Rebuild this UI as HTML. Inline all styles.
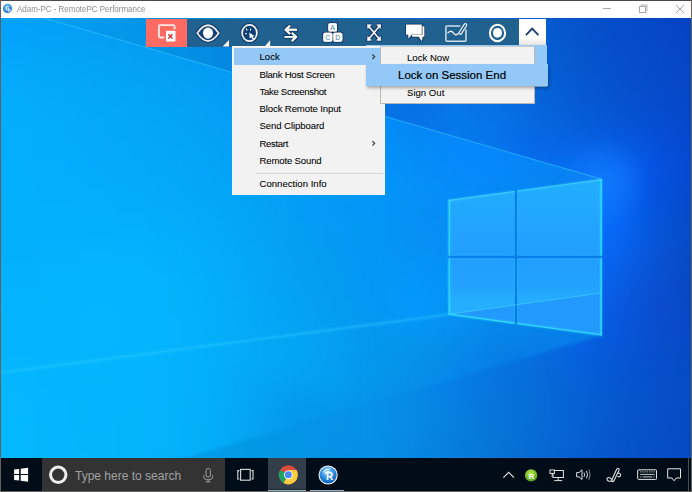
<!DOCTYPE html>
<html><head><meta charset="utf-8">
<style>
*{margin:0;padding:0;box-sizing:border-box}
html,body{width:692px;height:492px;overflow:hidden;background:#6b5d52;font-family:"Liberation Sans",sans-serif}
.abs{position:absolute}
.wpl{position:absolute;left:-24px;top:-8px;width:740px;height:478px}
.wpl i{position:absolute;left:0;width:740px;height:6px;display:block}
.wpclip{position:absolute;left:0;top:0;width:690px;height:440px}
#win{position:absolute;left:0;top:0;width:692px;height:492px;overflow:hidden;background:#fff}
.bd{position:absolute;background:#66605a}
#title{position:absolute;left:1px;top:1px;width:690px;height:17px;background:#fff}
#ttext{position:absolute;left:16px;top:2.3px;font-size:9.6px;color:#8c8c8c;white-space:nowrap;line-height:11px;transform:scaleX(0.83);transform-origin:0 0}
#desk{position:absolute;left:1px;top:18px;width:690px;height:440px;overflow:hidden}
#taskbar{position:absolute;left:1px;top:458px;width:690px;height:33px;background:#000d18}
.tb{position:absolute;top:18px;height:28px;background:#21618f}
.menu{position:absolute;background:#f2f2f2}
.mi{position:absolute;font-size:9.6px;color:#000;white-space:nowrap;line-height:11px;-webkit-text-stroke:0.06px #000}
</style></head><body>
<div id="win">
 <div id="title">
  <svg class="abs" style="left:1.2px;top:1.6px" width="11" height="11" viewBox="0 0 11 11">
   <defs><radialGradient id="rg1" cx="0.45" cy="0.3" r="0.75"><stop offset="0" stop-color="#6cc0ff"/><stop offset="1" stop-color="#0f62c4"/></radialGradient></defs>
   <circle cx="5.5" cy="5.4" r="4.6" fill="url(#rg1)"/>
   <path d="M4.3,3.8 V7.6 M6.3,5 V9 M8,6 V8.6" stroke="#e8f2ff" stroke-width="1.1" fill="none"/>
   <path d="M3.4,4.6 Q5,2.4 7.2,3.6" stroke="#cfe6ff" stroke-width="0.9" fill="none"/>
  </svg>
  <div id="ttext">Adam-PC - RemotePC Performance</div>
  <svg class="abs" style="left:0;top:0" width="690" height="17">
   <line x1="602" y1="7.5" x2="610" y2="7.5" stroke="#aaa" stroke-width="1"/>
   <rect x="638.5" y="5.5" width="6" height="6" fill="none" stroke="#a8a8a8"/>
   <path d="M640 5.5v-1.5h6v6h-1.5" fill="none" stroke="#b4b4b4"/>
   <path d="M675 4l8 8M683 4l-8 8" stroke="#a4a4a4" stroke-width="1"/>
  </svg>
 </div>
 <div id="desk">
<!--WP-->
<div class="wpl" style="filter:blur(3px)">
<i style="top:0px;background:linear-gradient(90deg,#04a4fa 0px,#04a2f8 40px,#049df3 80px,#0498ee 120px,#0494e8 160px,#048fe3 200px,#0588e0 240px,#0581de 280px,#057add 320px,#0574dc 360px,#066fdb 400px,#066bda 440px,#0667d8 480px,#0662d4 520px,#065acf 560px,#0652ca 600px,#064bc7 640px,#0646c6 680px,#0641c3 720px,#0641c3 760px)"></i>
<i style="top:6px;background:linear-gradient(90deg,#04a5fa 0px,#04a2f8 40px,#049df3 80px,#0499ee 120px,#0495e8 160px,#048fe3 200px,#0588e1 240px,#0581df 280px,#057add 320px,#0574dc 360px,#066fdb 400px,#066bda 440px,#0668d9 480px,#0663d5 520px,#065bd0 560px,#0653cb 600px,#064cc8 640px,#0647c6 680px,#0642c3 720px,#0642c3 760px)"></i>
<i style="top:12px;background:linear-gradient(90deg,#04a5fa 0px,#04a3f8 40px,#049ef3 80px,#0499ee 120px,#0495e8 160px,#048fe4 200px,#0588e1 240px,#0581df 280px,#057add 320px,#0574dc 360px,#066fdc 400px,#066cdb 440px,#0669d9 480px,#0664d6 520px,#065cd0 560px,#0653cb 600px,#064cc8 640px,#0647c7 680px,#0642c4 720px,#0642c4 760px)"></i>
<i style="top:18px;background:linear-gradient(90deg,#04a5fa 0px,#04a3f8 40px,#049ef4 80px,#0499ee 120px,#0496e8 160px,#0490e4 200px,#0589e1 240px,#0582df 280px,#057bde 320px,#0574dd 360px,#066fdc 400px,#066cdc 440px,#0669da 480px,#0664d7 520px,#065cd1 560px,#0654cb 600px,#064cc8 640px,#0648c7 680px,#0643c4 720px,#0643c4 760px)"></i>
<i style="top:24px;background:linear-gradient(90deg,#04a6fa 0px,#04a3f8 40px,#049ef4 80px,#049aee 120px,#0496e8 160px,#0490e4 200px,#0589e1 240px,#0582df 280px,#057bde 320px,#0575dd 360px,#0670dd 400px,#066ddc 440px,#066adb 480px,#0665d7 520px,#065dd2 560px,#0654cc 600px,#064dc9 640px,#0648c8 680px,#0643c4 720px,#0643c4 760px)"></i>
<i style="top:30px;background:linear-gradient(90deg,#04a6fa 0px,#04a4f8 40px,#049ff4 80px,#049aee 120px,#0496e8 160px,#0490e4 200px,#0489e1 240px,#0582e0 280px,#057bdf 320px,#0575de 360px,#0670dd 400px,#066ddd 440px,#066bdc 480px,#0666d8 520px,#065ed2 560px,#0655cc 600px,#064dc9 640px,#0649c8 680px,#0643c5 720px,#0643c5 760px)"></i>
<i style="top:36px;background:linear-gradient(90deg,#04a6fa 0px,#04a4f8 40px,#049ff4 80px,#049aee 120px,#0496e8 160px,#0491e4 200px,#048ae2 240px,#0582e0 280px,#057bdf 320px,#0575de 360px,#0670de 400px,#066ede 440px,#066cdd 480px,#0667d9 520px,#065fd3 560px,#0655cd 600px,#064ec9 640px,#0649c8 680px,#0644c5 720px,#0644c5 760px)"></i>
<i style="top:42px;background:linear-gradient(90deg,#04a6fa 0px,#04a4f8 40px,#049ff4 80px,#049bee 120px,#0497e8 160px,#0491e4 200px,#048ae2 240px,#0583e0 280px,#057cdf 320px,#0575df 360px,#0670de 400px,#066ede 440px,#066dde 480px,#0668da 520px,#065fd4 560px,#0656cd 600px,#064eca 640px,#0649c9 680px,#0644c5 720px,#0644c5 760px)"></i>
<i style="top:48px;background:linear-gradient(90deg,#03a7fa 0px,#04a5f8 40px,#04a0f4 80px,#049bee 120px,#0497e9 160px,#0491e5 200px,#048ae2 240px,#0583e1 280px,#057ce0 320px,#0576df 360px,#0671df 400px,#066edf 440px,#066edf 480px,#0669dc 520px,#0660d4 560px,#0656ce 600px,#064fca 640px,#064ac9 680px,#0644c5 720px,#0644c5 760px)"></i>
<i style="top:54px;background:linear-gradient(90deg,#03a7fa 0px,#04a5f8 40px,#04a0f4 80px,#049bee 120px,#0497e9 160px,#0491e5 200px,#048ae3 240px,#0583e1 280px,#057ce0 320px,#0576e0 360px,#0671df 400px,#066fe0 440px,#066fe0 480px,#066add 520px,#0661d5 560px,#0657ce 600px,#064fcb 640px,#064ac9 680px,#0645c6 720px,#0645c6 760px)"></i>
<i style="top:60px;background:linear-gradient(90deg,#03a7fa 0px,#03a5f8 40px,#04a0f4 80px,#049cef 120px,#0497e9 160px,#0492e5 200px,#048be3 240px,#0584e1 280px,#057ce0 320px,#0576e0 360px,#0671e0 400px,#066fe1 440px,#0670e1 480px,#066bde 520px,#0662d6 560px,#0658cf 600px,#0650cb 640px,#064bc9 680px,#0645c6 720px,#0645c6 760px)"></i>
<i style="top:66px;background:linear-gradient(90deg,#03a8fa 0px,#03a5f8 40px,#04a1f4 80px,#049cef 120px,#0498e9 160px,#0492e6 200px,#048be3 240px,#0584e2 280px,#057de1 320px,#0576e1 360px,#0671e1 400px,#0670e1 440px,#0671e2 480px,#066cdf 520px,#0662d7 560px,#0658d0 600px,#0650cc 640px,#064bca 680px,#0645c6 720px,#0645c6 760px)"></i>
<i style="top:72px;background:linear-gradient(90deg,#03a8fa 0px,#03a6f8 40px,#04a1f4 80px,#049cef 120px,#0498ea 160px,#0492e6 200px,#048be4 240px,#0584e2 280px,#057de1 320px,#0577e1 360px,#0672e1 400px,#0670e2 440px,#0672e3 480px,#066ee1 520px,#0663d8 560px,#0659d1 600px,#0651cd 640px,#064bca 680px,#0646c7 720px,#0646c7 760px)"></i>
<i style="top:78px;background:linear-gradient(90deg,#03a8fa 0px,#03a6f8 40px,#04a1f4 80px,#049def 120px,#0498ea 160px,#0492e6 200px,#048ce4 240px,#0584e2 280px,#057de2 320px,#0577e2 360px,#0672e2 400px,#0670e3 440px,#0673e5 480px,#066fe2 520px,#0664d9 560px,#0659d1 600px,#0651cd 640px,#064ccb 680px,#0646c7 720px,#0646c7 760px)"></i>
<i style="top:84px;background:linear-gradient(90deg,#03a9fa 0px,#03a6f8 40px,#04a2f4 80px,#049def 120px,#0498ea 160px,#0492e6 200px,#048ce4 240px,#0585e3 280px,#057ee2 320px,#0577e2 360px,#0672e2 400px,#0671e4 440px,#0674e6 480px,#0670e3 520px,#0664da 560px,#065ad2 600px,#0652ce 640px,#064ccc 680px,#0646c8 720px,#0646c8 760px)"></i>
<i style="top:90px;background:linear-gradient(90deg,#03a9fa 0px,#03a7f8 40px,#03a2f4 80px,#049def 120px,#0498ea 160px,#0493e7 200px,#048ce5 240px,#0585e3 280px,#057ee3 320px,#0578e3 360px,#0673e3 400px,#0671e4 440px,#0675e7 480px,#0671e5 520px,#0665db 560px,#065bd4 600px,#0652d0 640px,#064ccd 680px,#0646c8 720px,#0646c8 760px)"></i>
<i style="top:96px;background:linear-gradient(90deg,#03a9fa 0px,#03a7f8 40px,#03a2f4 80px,#049def 120px,#0499eb 160px,#0493e7 200px,#048ce5 240px,#0585e4 280px,#057fe3 320px,#0578e3 360px,#0673e4 400px,#0671e5 440px,#0676e8 480px,#0671e6 520px,#0665dc 560px,#065cd5 600px,#0653d1 640px,#064dce 680px,#0646c9 720px,#0646c9 760px)"></i>
<i style="top:102px;background:linear-gradient(90deg,#03a9fa 0px,#03a7f8 40px,#03a2f4 80px,#049eef 120px,#0499eb 160px,#0493e7 200px,#048de5 240px,#0586e4 280px,#057fe4 320px,#0579e4 360px,#0674e4 400px,#0672e6 440px,#0677e9 480px,#0672e7 520px,#0666dd 560px,#065dd7 600px,#0654d3 640px,#064dd0 680px,#0646c9 720px,#0646c9 760px)"></i>
<i style="top:108px;background:linear-gradient(90deg,#03aafa 0px,#03a8f8 40px,#03a3f4 80px,#049eef 120px,#0499eb 160px,#0493e8 200px,#048de6 240px,#0586e4 280px,#057fe4 320px,#0579e4 360px,#0674e5 400px,#0673e7 440px,#0678ea 480px,#0673e9 520px,#0666de 560px,#065ed9 600px,#0655d5 640px,#064dd1 680px,#0647ca 720px,#0647ca 760px)"></i>
<i style="top:114px;background:linear-gradient(90deg,#03aafa 0px,#03a8f8 40px,#03a3f4 80px,#049eef 120px,#0499eb 160px,#0494e8 200px,#048de6 240px,#0587e5 280px,#0580e5 320px,#057ae5 360px,#0675e6 400px,#0674e8 440px,#0678eb 480px,#0673ea 520px,#0667e0 560px,#065fdb 600px,#0656d7 640px,#064ed3 680px,#0647cb 720px,#0647cb 760px)"></i>
<i style="top:120px;background:linear-gradient(90deg,#03aafa 0px,#03a8f8 40px,#03a3f4 80px,#049fef 120px,#0499eb 160px,#0494e8 200px,#048ee6 240px,#0587e5 280px,#0580e5 320px,#057ae5 360px,#0676e6 400px,#0675e8 440px,#0679ec 480px,#0673ea 520px,#0667e1 560px,#0661de 600px,#0658db 640px,#064ed5 680px,#0647cc 720px,#0647cc 760px)"></i>
<i style="top:126px;background:linear-gradient(90deg,#03abfa 0px,#03a8f8 40px,#03a4f4 80px,#039fef 120px,#049aec 160px,#0494e9 200px,#048ee7 240px,#0587e6 280px,#0581e5 320px,#057be6 360px,#0677e7 400px,#0676e9 440px,#0679ed 480px,#0673eb 520px,#0667e3 560px,#0662e1 600px,#065ade 640px,#064fd7 680px,#0647cc 720px,#0647cc 760px)"></i>
<i style="top:132px;background:linear-gradient(90deg,#03abfa 0px,#03a9f8 40px,#03a4f4 80px,#039ff0 120px,#049aec 160px,#0494e9 200px,#048ee7 240px,#0588e6 280px,#0581e6 320px,#057ce6 360px,#0677e8 400px,#0676ea 440px,#0679ed 480px,#0674ec 520px,#0668e5 560px,#0664e4 600px,#065ce2 640px,#0650d9 680px,#0647cd 720px,#0647cd 760px)"></i>
<i style="top:138px;background:linear-gradient(90deg,#03abfa 0px,#03a9f8 40px,#03a4f4 80px,#039ff0 120px,#049aec 160px,#0495e9 200px,#048fe7 240px,#0588e6 280px,#0582e6 320px,#057ce7 360px,#0678e8 400px,#0677eb 440px,#0679ee 480px,#0674ed 520px,#0669e7 560px,#0666e8 600px,#065ee7 640px,#0650db 680px,#0647cd 720px,#0647cd 760px)"></i>
<i style="top:144px;background:linear-gradient(90deg,#03abf9 0px,#03a9f8 40px,#03a4f4 80px,#03a0f0 120px,#049aec 160px,#0495e9 200px,#048fe8 240px,#0589e7 280px,#0583e7 320px,#057de8 360px,#0679e9 400px,#0678ec 440px,#0679ef 480px,#0674ee 520px,#066ae9 560px,#0668ec 600px,#0661eb 640px,#0651dd 680px,#0647ce 720px,#0647ce 760px)"></i>
<i style="top:150px;background:linear-gradient(90deg,#03acf9 0px,#03aaf8 40px,#03a5f4 80px,#03a0f0 120px,#049bec 160px,#0495ea 200px,#048fe8 240px,#0589e7 280px,#0583e7 320px,#057ee8 360px,#067aea 400px,#0679ec 440px,#0679ef 480px,#0674ef 520px,#066cec 560px,#066aef 600px,#0663ee 640px,#0651de 680px,#0648ce 720px,#0648ce 760px)"></i>
<i style="top:156px;background:linear-gradient(90deg,#03acf9 0px,#03aaf8 40px,#03a5f4 80px,#03a0f0 120px,#049bed 160px,#0495ea 200px,#0490e8 240px,#058ae8 280px,#0584e8 320px,#057ee9 360px,#067bea 400px,#067aed 440px,#067af0 480px,#0675f0 520px,#066dee 560px,#066df3 600px,#0665f2 640px,#0652de 680px,#0648cd 720px,#0648cd 760px)"></i>
<i style="top:162px;background:linear-gradient(90deg,#03acf9 0px,#03aaf8 40px,#03a5f4 80px,#03a0f0 120px,#049bed 160px,#0496ea 200px,#0490e9 240px,#058ae8 280px,#0584e8 320px,#057fe9 360px,#067ceb 400px,#067aee 440px,#067af1 480px,#0675f1 520px,#066ff1 560px,#066ef6 600px,#0667f5 640px,#0652de 680px,#0648cd 720px,#0648cd 760px)"></i>
<i style="top:168px;background:linear-gradient(90deg,#03acf9 0px,#03aaf8 40px,#03a5f4 80px,#03a1f0 120px,#049bed 160px,#0496eb 200px,#0490e9 240px,#058be8 280px,#0585e8 320px,#0580e9 360px,#067ceb 400px,#067bee 440px,#067af1 480px,#0676f2 520px,#0670f3 560px,#0670f9 600px,#0668f7 640px,#0552de 680px,#0648cc 720px,#0648cc 760px)"></i>
<i style="top:174px;background:linear-gradient(90deg,#03adf9 0px,#03abf8 40px,#03a6f4 80px,#03a1f0 120px,#049ced 160px,#0496eb 200px,#0491e9 240px,#058be9 280px,#0586e9 320px,#0581ea 360px,#067dec 400px,#067cef 440px,#067af2 480px,#0676f3 520px,#0672f5 560px,#0671fb 600px,#0668f8 640px,#0552de 680px,#0648cc 720px,#0648cc 760px)"></i>
<i style="top:180px;background:linear-gradient(90deg,#03adf9 0px,#03abf8 40px,#03a6f4 80px,#03a1f0 120px,#049ced 160px,#0497eb 200px,#0491e9 240px,#058ce9 280px,#0586e9 320px,#0581ea 360px,#067eec 400px,#067cef 440px,#067bf2 480px,#0677f4 520px,#0673f7 560px,#0672fd 600px,#0669f8 640px,#0552dd 680px,#0648cb 720px,#0648cb 760px)"></i>
<i style="top:186px;background:linear-gradient(90deg,#03adf9 0px,#03abf8 40px,#03a6f4 80px,#03a1f1 120px,#039cee 160px,#0497eb 200px,#0492ea 240px,#058ce9 280px,#0587ea 320px,#0582eb 360px,#067fed 400px,#067df0 440px,#067bf3 480px,#0678f5 520px,#0674f8 560px,#0673fe 600px,#0669f8 640px,#0552dc 680px,#0649ca 720px,#0649ca 760px)"></i>
<i style="top:192px;background:linear-gradient(90deg,#03adf9 0px,#03abf8 40px,#03a6f4 80px,#03a2f1 120px,#039dee 160px,#0497eb 200px,#0492ea 240px,#058cea 280px,#0587ea 320px,#0583eb 360px,#067fed 400px,#067df0 440px,#067bf3 480px,#0678f6 520px,#0675fa 560px,#0674ff 600px,#0669f8 640px,#0553dc 680px,#0649c8 720px,#0649c8 760px)"></i>
<i style="top:198px;background:linear-gradient(90deg,#03aef9 0px,#03acf8 40px,#03a7f4 80px,#03a2f1 120px,#039dee 160px,#0498ec 200px,#0492ea 240px,#048dea 280px,#0588ea 320px,#0584eb 360px,#0680ee 400px,#067ef0 440px,#067cf4 480px,#0678f7 520px,#0675fb 560px,#0674ff 600px,#0669f7 640px,#0553db 680px,#0649c7 720px,#0649c7 760px)"></i>
<i style="top:204px;background:linear-gradient(90deg,#03aef9 0px,#03acf8 40px,#03a7f4 80px,#03a2f1 120px,#039dee 160px,#0498ec 200px,#0493ea 240px,#048dea 280px,#0589ea 320px,#0584ec 360px,#0681ee 400px,#067ef1 440px,#067cf4 480px,#0679f7 520px,#0676fb 560px,#0674ff 600px,#0668f7 640px,#0554da 680px,#0649c6 720px,#0649c6 760px)"></i>
<i style="top:210px;background:linear-gradient(90deg,#03aef9 0px,#03acf8 40px,#03a7f4 80px,#03a2f1 120px,#039dee 160px,#0498ec 200px,#0493eb 240px,#048eea 280px,#0589eb 320px,#0585ec 360px,#0681ee 400px,#067ff1 440px,#067cf4 480px,#0679f7 520px,#0676fc 560px,#0674ff 600px,#0668f6 640px,#0654d9 680px,#064ac5 720px,#064ac5 760px)"></i>
<i style="top:216px;background:linear-gradient(90deg,#03aef9 0px,#03acf8 40px,#03a7f4 80px,#03a3f1 120px,#039eee 160px,#0499ec 200px,#0493eb 240px,#048eeb 280px,#058aeb 320px,#0586ec 360px,#0682ee 400px,#067ff1 440px,#067df4 480px,#0679f7 520px,#0676fc 560px,#0673ff 600px,#0667f4 640px,#0654d8 680px,#064ac4 720px,#064ac4 760px)"></i>
<i style="top:222px;background:linear-gradient(90deg,#03aff9 0px,#03adf8 40px,#03a8f4 80px,#03a3f1 120px,#039eee 160px,#0499ec 200px,#0494eb 240px,#048feb 280px,#058aeb 320px,#0586ed 360px,#0683ef 400px,#0680f1 440px,#067df4 480px,#067af7 520px,#0676fc 560px,#0672fe 600px,#0667f3 640px,#0654d8 680px,#064ac4 720px,#064ac4 760px)"></i>
<i style="top:228px;background:linear-gradient(90deg,#03aff9 0px,#03adf8 40px,#03a8f4 80px,#03a3f1 120px,#039eee 160px,#0499ec 200px,#0494eb 240px,#048feb 280px,#058beb 320px,#0587ed 360px,#0683ef 400px,#0680f1 440px,#067df4 480px,#067af7 520px,#0676fb 560px,#0772fd 600px,#0766f1 640px,#0754d7 680px,#074ac3 720px,#074ac3 760px)"></i>
<i style="top:234px;background:linear-gradient(90deg,#02aff9 0px,#03adf8 40px,#03a8f4 80px,#03a3f1 120px,#039eee 160px,#049aed 200px,#0495eb 240px,#0490eb 280px,#058bec 320px,#0587ed 360px,#0684ef 400px,#0681f1 440px,#067df4 480px,#067af7 520px,#0676fb 560px,#0771fb 600px,#0764ef 640px,#0753d6 680px,#0749c3 720px,#0749c3 760px)"></i>
<i style="top:240px;background:linear-gradient(90deg,#02aff9 0px,#03adf8 40px,#03a8f4 80px,#03a4f1 120px,#039fef 160px,#049aed 200px,#0495eb 240px,#0490eb 280px,#058cec 320px,#0588ed 360px,#0684ef 400px,#0681f1 440px,#067ef4 480px,#067af7 520px,#0676fa 560px,#0770fa 600px,#0763ee 640px,#0853d5 680px,#0749c3 720px,#0749c3 760px)"></i>
<i style="top:246px;background:linear-gradient(90deg,#02b0f9 0px,#02aef8 40px,#03a9f4 80px,#03a4f1 120px,#039fef 160px,#049aed 200px,#0495ec 240px,#0491eb 280px,#058dec 320px,#0589ed 360px,#0685ef 400px,#0682f1 440px,#067ef3 480px,#067af6 520px,#0675f9 560px,#076ef8 600px,#0862ec 640px,#0852d4 680px,#0749c3 720px,#0749c3 760px)"></i>
<i style="top:252px;background:linear-gradient(90deg,#02b0f9 0px,#02aef8 40px,#03a9f4 80px,#03a4f1 120px,#039fef 160px,#039aed 200px,#0496ec 240px,#0491eb 280px,#058dec 320px,#0589ed 360px,#0686ef 400px,#0682f1 440px,#067ef3 480px,#067af5 520px,#0675f8 560px,#076df7 600px,#0861ea 640px,#0852d3 680px,#0848c3 720px,#0848c3 760px)"></i>
<i style="top:258px;background:linear-gradient(90deg,#02b0f9 0px,#02aef7 40px,#03a9f4 80px,#03a4f1 120px,#039fef 160px,#039bed 200px,#0496ec 240px,#0492ec 280px,#058eec 320px,#058aed 360px,#0686ef 400px,#0682f0 440px,#067ef2 480px,#0679f4 520px,#0674f7 560px,#076cf5 600px,#085fe8 640px,#0951d3 680px,#0848c2 720px,#0848c2 760px)"></i>
<i style="top:264px;background:linear-gradient(90deg,#02b0f9 0px,#02aef7 40px,#03a9f4 80px,#03a5f1 120px,#03a0ef 160px,#039bed 200px,#0496ec 240px,#0492ec 280px,#058eec 320px,#058aed 360px,#0687ef 400px,#0683f0 440px,#067ef2 480px,#0679f3 520px,#0673f5 560px,#076bf3 600px,#085ee7 640px,#0950d2 680px,#0848c2 720px,#0848c2 760px)"></i>
<i style="top:270px;background:linear-gradient(90deg,#02b1f9 0px,#02aef7 40px,#03aaf4 80px,#03a5f1 120px,#03a0ef 160px,#039bed 200px,#0497ec 240px,#0493ec 280px,#058fec 320px,#058bed 360px,#0687ef 400px,#0683f0 440px,#067ef1 480px,#0679f2 520px,#0673f4 560px,#076af2 600px,#085de5 640px,#094fd1 680px,#0847c2 720px,#0847c2 760px)"></i>
<i style="top:276px;background:linear-gradient(90deg,#02b1f9 0px,#02aff7 40px,#03aaf4 80px,#03a5f1 120px,#03a0ef 160px,#039ced 200px,#0497ec 240px,#0493ec 280px,#058fec 320px,#058bed 360px,#0688ee 400px,#0683f0 440px,#067ef0 480px,#0679f1 520px,#0672f2 560px,#0769f0 600px,#095ce4 640px,#0a4ed0 680px,#0947c2 720px,#0947c2 760px)"></i>
<i style="top:282px;background:linear-gradient(90deg,#02b1f9 0px,#02aff7 40px,#03aaf4 80px,#03a5f1 120px,#03a0ef 160px,#039ced 200px,#0497ec 240px,#0493ec 280px,#0590ec 320px,#058ced 360px,#0688ee 400px,#0683ef 440px,#067ef0 480px,#0678f0 520px,#0671f1 560px,#0768ee 600px,#095be2 640px,#0a4ed0 680px,#0947c2 720px,#0947c2 760px)"></i>
<i style="top:288px;background:linear-gradient(90deg,#02b1f9 0px,#02aff7 40px,#02aaf4 80px,#03a5f1 120px,#03a1ef 160px,#039ced 200px,#0498ec 240px,#0494ec 280px,#0590ec 320px,#058ced 360px,#0688ee 400px,#0684ef 440px,#067eef 480px,#0678ef 520px,#0671ef 560px,#0767ed 600px,#095ae1 640px,#0a4dcf 680px,#0947c2 720px,#0947c2 760px)"></i>
<i style="top:294px;background:linear-gradient(90deg,#02b1f9 0px,#02aff7 40px,#02aaf4 80px,#03a6f1 120px,#03a1ef 160px,#039ced 200px,#0498ec 240px,#0494ec 280px,#0590ec 320px,#058ded 360px,#0689ee 400px,#0684ee 440px,#067eee 480px,#0678ed 520px,#0670ed 560px,#0766eb 600px,#0859e0 640px,#0a4dce 680px,#0947c2 720px,#0947c2 760px)"></i>
<i style="top:300px;background:linear-gradient(90deg,#02b2f9 0px,#02aff7 40px,#02abf4 80px,#03a6f1 120px,#03a1ef 160px,#039ded 200px,#0498ec 240px,#0494ec 280px,#0591ec 320px,#058ded 360px,#0689ee 400px,#0684ee 440px,#067eed 480px,#0677ec 520px,#066fec 560px,#0765ea 600px,#0858df 640px,#0a4dce 680px,#0947c2 720px,#0947c2 760px)"></i>
<i style="top:306px;background:linear-gradient(90deg,#02b2f9 0px,#02b0f7 40px,#02abf4 80px,#03a6f1 120px,#03a1ef 160px,#039ded 200px,#0499ec 240px,#0495eb 280px,#0591ec 320px,#058eed 360px,#068aed 400px,#0684ed 440px,#067eec 480px,#0677ea 520px,#066fea 560px,#0664e8 600px,#0858de 640px,#094dce 680px,#0947c3 720px,#0947c3 760px)"></i>
<i style="top:312px;background:linear-gradient(90deg,#02b2f9 0px,#02b0f7 40px,#02abf4 80px,#03a6f1 120px,#03a2ef 160px,#039ded 200px,#0499ec 240px,#0495eb 280px,#0592ec 320px,#058eec 360px,#068aed 400px,#0685ed 440px,#067eeb 480px,#0677e9 520px,#066ee8 560px,#0664e7 600px,#0857dc 640px,#094dcd 680px,#0847c3 720px,#0847c3 760px)"></i>
<i style="top:318px;background:linear-gradient(90deg,#02b2f8 0px,#02b0f7 40px,#02abf4 80px,#03a6f1 120px,#03a2ef 160px,#039ded 200px,#0499ec 240px,#0495eb 280px,#0592ec 320px,#058fec 360px,#068bed 400px,#0685ec 440px,#067eea 480px,#0676e7 520px,#066ee6 560px,#0663e5 600px,#0857db 640px,#094dcd 680px,#0848c3 720px,#0848c3 760px)"></i>
<i style="top:324px;background:linear-gradient(90deg,#02b2f8 0px,#02b0f7 40px,#02abf4 80px,#03a7f1 120px,#03a2ef 160px,#039eed 200px,#0399ec 240px,#0496eb 280px,#0492eb 320px,#058fec 360px,#068bed 400px,#0685ec 440px,#067ee9 480px,#0676e6 520px,#066de4 560px,#0662e4 600px,#0757da 640px,#084ecd 680px,#0848c3 720px,#0848c3 760px)"></i>
<i style="top:330px;background:linear-gradient(90deg,#02b3f8 0px,#02b0f7 40px,#02acf4 80px,#03a7f1 120px,#03a2ef 160px,#039eed 200px,#039aeb 240px,#0496eb 280px,#0493eb 320px,#058fec 360px,#068bec 400px,#0685eb 440px,#067ee9 480px,#0676e4 520px,#066de2 560px,#0662e2 600px,#0757d9 640px,#084ecd 680px,#0848c3 720px,#0848c3 760px)"></i>
<i style="top:336px;background:linear-gradient(90deg,#02b3f8 0px,#02b1f7 40px,#02acf4 80px,#02a7f1 120px,#03a2ee 160px,#039eed 200px,#039aeb 240px,#0496eb 280px,#0493eb 320px,#0590ec 360px,#068cec 400px,#0686eb 440px,#067ee8 480px,#0676e3 520px,#066de0 560px,#0662e0 600px,#0757d7 640px,#084ecc 680px,#0749c4 720px,#0749c4 760px)"></i>
<i style="top:342px;background:linear-gradient(90deg,#02b3f8 0px,#02b1f7 40px,#02acf4 80px,#02a7f1 120px,#03a3ee 160px,#039eec 200px,#039aeb 240px,#0496eb 280px,#0493eb 320px,#0590eb 360px,#068cec 400px,#0686ea 440px,#067ee7 480px,#0675e1 520px,#066cde 560px,#0661de 600px,#0756d6 640px,#074ecc 680px,#0749c4 720px,#0749c4 760px)"></i>
<i style="top:348px;background:linear-gradient(90deg,#02b3f8 0px,#02b1f7 40px,#02acf4 80px,#02a7f1 120px,#03a3ee 160px,#039eec 200px,#039aeb 240px,#0497ea 280px,#0493ea 320px,#0590eb 360px,#068deb 400px,#0686ea 440px,#067ee6 480px,#0675e0 520px,#066cdc 560px,#0661dd 600px,#0656d5 640px,#074fcb 680px,#074ac4 720px,#074ac4 760px)"></i>
<i style="top:354px;background:linear-gradient(90deg,#02b3f8 0px,#02b1f7 40px,#02acf3 80px,#02a8f1 120px,#03a3ee 160px,#039fec 200px,#039aeb 240px,#0497ea 280px,#0494ea 320px,#0591eb 360px,#068deb 400px,#0686ea 440px,#067ee6 480px,#0675de 520px,#066cdb 560px,#0661db 600px,#0656d3 640px,#074fcb 680px,#064ac4 720px,#064ac4 760px)"></i>
<i style="top:360px;background:linear-gradient(90deg,#02b3f8 0px,#02b1f7 40px,#02adf3 80px,#02a8f1 120px,#03a3ee 160px,#039fec 200px,#039beb 240px,#0497ea 280px,#0494ea 320px,#0591ea 360px,#068deb 400px,#0687e9 440px,#067ee5 480px,#0675dd 520px,#066cd9 560px,#0661d9 600px,#0656d2 640px,#064fcb 680px,#064ac4 720px,#064ac4 760px)"></i>
<i style="top:366px;background:linear-gradient(90deg,#02b4f8 0px,#02b2f6 40px,#02adf3 80px,#02a8f0 120px,#03a3ee 160px,#039fec 200px,#039beb 240px,#0497ea 280px,#0494ea 320px,#0591ea 360px,#068eea 400px,#0687e9 440px,#067ee4 480px,#0675dd 520px,#066cd8 560px,#0661d8 600px,#0656d0 640px,#0650ca 680px,#064bc4 720px,#064bc4 760px)"></i>
<i style="top:372px;background:linear-gradient(90deg,#02b4f8 0px,#02b2f6 40px,#02adf3 80px,#02a8f0 120px,#03a4ee 160px,#039fec 200px,#039bea 240px,#0497e9 280px,#0494e9 320px,#0592ea 360px,#068eea 400px,#0687e8 440px,#067ee4 480px,#0674dc 520px,#066cd7 560px,#0661d6 600px,#0657d0 640px,#0650ca 680px,#064bc4 720px,#064bc4 760px)"></i>
<i style="top:378px;background:linear-gradient(90deg,#02b4f8 0px,#02b2f6 40px,#02adf3 80px,#02a8f0 120px,#03a4ee 160px,#039fec 200px,#039bea 240px,#0497e9 280px,#0494e9 320px,#0592e9 360px,#068eea 400px,#0688e8 440px,#067ee3 480px,#0674db 520px,#066cd6 560px,#0661d5 600px,#0657cf 640px,#0650ca 680px,#064bc4 720px,#064bc4 760px)"></i>
<i style="top:384px;background:linear-gradient(90deg,#02b4f8 0px,#02b2f6 40px,#02adf3 80px,#02a8f0 120px,#03a4ee 160px,#039fec 200px,#039bea 240px,#0497e9 280px,#0494e9 320px,#0592e9 360px,#068fe9 400px,#0688e7 440px,#067ee3 480px,#0674db 520px,#066cd6 560px,#0661d4 600px,#0657ce 640px,#0650c9 680px,#064bc4 720px,#064bc4 760px)"></i>
<i style="top:390px;background:linear-gradient(90deg,#02b4f8 0px,#02b2f6 40px,#02adf3 80px,#02a9f0 120px,#02a4ee 160px,#039feb 200px,#039bea 240px,#0497e9 280px,#0494e8 320px,#0592e9 360px,#068fe9 400px,#0688e7 440px,#067ee2 480px,#0674da 520px,#066cd6 560px,#0661d4 600px,#0656cd 640px,#0650c9 680px,#064bc4 720px,#064bc4 760px)"></i>
<i style="top:396px;background:linear-gradient(90deg,#02b4f7 0px,#02b2f6 40px,#02aef3 80px,#02a9f0 120px,#02a4ed 160px,#03a0eb 200px,#039bea 240px,#0498e8 280px,#0494e8 320px,#0592e8 360px,#068fe8 400px,#0688e6 440px,#067ee1 480px,#0674da 520px,#066cd6 560px,#0661d3 600px,#0656cd 640px,#0650c9 680px,#064ac3 720px,#064ac3 760px)"></i>
<i style="top:402px;background:linear-gradient(90deg,#02b5f7 0px,#02b3f6 40px,#02aef3 80px,#02a9f0 120px,#02a4ed 160px,#03a0eb 200px,#039be9 240px,#0498e8 280px,#0494e7 320px,#0592e8 360px,#068fe8 400px,#0688e6 440px,#067ee1 480px,#0674da 520px,#066cd6 560px,#0661d2 600px,#0656cc 640px,#064fc8 680px,#064ac3 720px,#064ac3 760px)"></i>
<i style="top:408px;background:linear-gradient(90deg,#02b5f7 0px,#02b3f6 40px,#02aef3 80px,#02a9f0 120px,#02a4ed 160px,#03a0eb 200px,#039ce9 240px,#0398e8 280px,#0494e7 320px,#0592e7 360px,#068fe8 400px,#0688e5 440px,#067ee0 480px,#0674da 520px,#066bd5 560px,#0661d2 600px,#0656cc 640px,#064fc8 680px,#064ac3 720px,#064ac3 760px)"></i>
<i style="top:414px;background:linear-gradient(90deg,#02b5f7 0px,#02b3f6 40px,#02aef3 80px,#02a9f0 120px,#02a4ed 160px,#03a0eb 200px,#039ce9 240px,#0398e7 280px,#0494e7 320px,#0592e7 360px,#068fe7 400px,#0688e5 440px,#067ee0 480px,#0674da 520px,#066bd5 560px,#0661d1 600px,#0656cb 640px,#064fc7 680px,#064ac2 720px,#064ac2 760px)"></i>
<i style="top:420px;background:linear-gradient(90deg,#02b5f7 0px,#02b3f6 40px,#02aef3 80px,#02a9f0 120px,#02a5ed 160px,#03a0eb 200px,#039ce9 240px,#0398e7 280px,#0494e6 320px,#0592e7 360px,#068fe7 400px,#0688e4 440px,#067edf 480px,#0674d9 520px,#066bd5 560px,#0660d0 600px,#0655ca 640px,#064fc7 680px,#064ac2 720px,#064ac2 760px)"></i>
<i style="top:426px;background:linear-gradient(90deg,#02b5f7 0px,#02b3f6 40px,#02aef2 80px,#02a9ef 120px,#02a5ed 160px,#03a0ea 200px,#039ce8 240px,#0398e7 280px,#0494e6 320px,#0592e6 360px,#068fe6 400px,#0687e3 440px,#067ddf 480px,#0674d9 520px,#066ad5 560px,#0660d0 600px,#0655c9 640px,#064fc6 680px,#0649c1 720px,#0649c1 760px)"></i>
<i style="top:432px;background:linear-gradient(90deg,#02b5f7 0px,#02b3f6 40px,#02aef2 80px,#02aaef 120px,#02a5ed 160px,#03a0ea 200px,#039ce8 240px,#0398e7 280px,#0494e6 320px,#0592e6 360px,#068ee5 400px,#0687e3 440px,#067dde 480px,#0673d9 520px,#066ad4 560px,#0660cf 600px,#0655c9 640px,#064ec6 680px,#0649c1 720px,#0649c1 760px)"></i>
<i style="top:438px;background:linear-gradient(90deg,#02b6f7 0px,#02b3f5 40px,#02aff2 80px,#02aaef 120px,#02a5ed 160px,#03a0ea 200px,#039ce8 240px,#0398e6 280px,#0494e5 320px,#0592e5 360px,#068ee5 400px,#0686e2 440px,#067dde 480px,#0673d8 520px,#066ad4 560px,#065fce 600px,#0654c8 640px,#064ec5 680px,#0649c0 720px,#0649c0 760px)"></i>
<i style="top:444px;background:linear-gradient(90deg,#01b6f7 0px,#02b4f5 40px,#02aff2 80px,#02aaef 120px,#02a5ec 160px,#03a0ea 200px,#039ce8 240px,#0398e6 280px,#0494e5 320px,#0591e5 360px,#068ee4 400px,#0686e1 440px,#067ddd 480px,#0673d8 520px,#0669d3 560px,#065fce 600px,#0654c8 640px,#064ec4 680px,#0649c0 720px,#0649c0 760px)"></i>
<i style="top:450px;background:linear-gradient(90deg,#01b6f7 0px,#02b4f5 40px,#02aff2 80px,#02aaef 120px,#02a5ec 160px,#03a1ea 200px,#039ce8 240px,#0398e6 280px,#0494e5 320px,#0591e4 360px,#058de4 400px,#0686e1 440px,#067cdd 480px,#0673d8 520px,#0669d3 560px,#065fcd 600px,#0654c7 640px,#064ec4 680px,#0649bf 720px,#0649bf 760px)"></i>
<i style="top:456px;background:linear-gradient(90deg,#01b6f7 0px,#02b4f5 40px,#02aff2 80px,#02aaef 120px,#02a5ec 160px,#03a1ea 200px,#039ce7 240px,#0398e6 280px,#0494e4 320px,#0591e4 360px,#058de3 400px,#0685e0 440px,#067cdc 480px,#0672d7 520px,#0669d2 560px,#065ecd 600px,#0654c7 640px,#064dc3 680px,#0648bf 720px,#0648bf 760px)"></i>
<i style="top:462px;background:linear-gradient(90deg,#01b6f6 0px,#02b4f5 40px,#02aff2 80px,#02aaef 120px,#02a5ec 160px,#03a1e9 200px,#039ce7 240px,#0398e5 280px,#0494e4 320px,#0591e4 360px,#058ce2 400px,#0685e0 440px,#067cdc 480px,#0672d7 520px,#0668d2 560px,#065ecc 600px,#0654c6 640px,#064dc2 680px,#0648be 720px,#0648be 760px)"></i>
<i style="top:468px;background:linear-gradient(90deg,#01b6f6 0px,#01b4f5 40px,#02aff2 80px,#02aaef 120px,#02a5ec 160px,#03a1e9 200px,#039ce7 240px,#0398e5 280px,#0494e4 320px,#0591e3 360px,#058ce2 400px,#0684df 440px,#067bdb 480px,#0672d6 520px,#0668d1 560px,#065ecc 600px,#0654c6 640px,#064dc2 680px,#0648be 720px,#0648be 760px)"></i>
<i style="top:474px;background:linear-gradient(90deg,#01b6f6 0px,#01b4f5 40px,#02aff2 80px,#02aaef 120px,#02a6ec 160px,#02a1e9 200px,#039ce7 240px,#0398e5 280px,#0494e4 320px,#0590e3 360px,#058be1 400px,#0684de 440px,#067bdb 480px,#0672d6 520px,#0668d1 560px,#065ecb 600px,#0654c6 640px,#064dc1 680px,#0648bd 720px,#0648bd 760px)"></i>
</div>
<div class="wpclip" style="clip-path:inset(-20px 89px -20px -20px);-webkit-mask-image:linear-gradient(196.12deg, transparent 179.0px, #000 180.4px)">
<div class="wpclip" style="-webkit-mask-image:linear-gradient(343.57deg, transparent 140.4px, #000 145.4px)">
<div class="wpl" style="filter:blur(3px)">
<i style="top:0px;background:linear-gradient(90deg,#04a1fa 0px,#04a0fa 40px,#049ef7 80px,#049cf4 120px,#049af2 160px,#0498f2 200px,#0494f2 240px,#0491f3 280px,#048df3 320px,#0488f4 360px,#0484f4 400px,#0480f4 440px,#047df5 480px,#057af5 520px,#0578f4 560px,#0575f3 600px,#0572f1 640px,#056ff0 680px,#056cee 720px,#056cee 760px)"></i>
<i style="top:6px;background:linear-gradient(90deg,#04a2fb 0px,#04a1fa 40px,#049ff7 80px,#049df4 120px,#049bf2 160px,#0498f2 200px,#0495f2 240px,#0491f3 280px,#048df4 320px,#0489f4 360px,#0484f4 400px,#0480f4 440px,#057df5 480px,#057bf5 520px,#0578f4 560px,#0575f3 600px,#0572f1 640px,#056ff0 680px,#056cee 720px,#056cee 760px)"></i>
<i style="top:12px;background:linear-gradient(90deg,#04a3fb 0px,#04a2fa 40px,#04a0f7 80px,#049ef5 120px,#049cf2 160px,#0499f2 200px,#0496f3 240px,#0492f3 280px,#048ef4 320px,#0489f4 360px,#0485f4 400px,#0481f5 440px,#057ef5 480px,#057bf5 520px,#0579f5 560px,#0576f3 600px,#0573f1 640px,#056ff0 680px,#056cee 720px,#056cee 760px)"></i>
<i style="top:18px;background:linear-gradient(90deg,#04a3fb 0px,#04a2fa 40px,#04a1f8 80px,#049ff5 120px,#049cf3 160px,#049af2 200px,#0496f3 240px,#0493f3 280px,#048ef4 320px,#048af5 360px,#0485f5 400px,#0481f5 440px,#057ef5 480px,#057bf5 520px,#0579f5 560px,#0576f3 600px,#0573f2 640px,#0570f0 680px,#056dee 720px,#056dee 760px)"></i>
<i style="top:24px;background:linear-gradient(90deg,#04a4fb 0px,#04a3fa 40px,#04a2f8 80px,#049ff5 120px,#049df3 160px,#049af3 200px,#0497f3 240px,#0493f4 280px,#048ff4 320px,#048af5 360px,#0486f5 400px,#0482f5 440px,#057ef5 480px,#057cf6 520px,#0579f5 560px,#0577f3 600px,#0574f2 640px,#0570f0 680px,#056dee 720px,#056dee 760px)"></i>
<i style="top:30px;background:linear-gradient(90deg,#04a5fb 0px,#04a4fb 40px,#04a2f8 80px,#04a0f5 120px,#049ef3 160px,#049bf3 200px,#0498f3 240px,#0494f4 280px,#048ff5 320px,#048bf5 360px,#0486f5 400px,#0482f5 440px,#057ff6 480px,#057cf6 520px,#057af5 560px,#0577f4 600px,#0574f2 640px,#0570f0 680px,#056dee 720px,#056dee 760px)"></i>
<i style="top:36px;background:linear-gradient(90deg,#04a6fb 0px,#04a5fb 40px,#04a3f8 80px,#04a1f6 120px,#049ff3 160px,#049cf3 200px,#0498f4 240px,#0494f4 280px,#0490f5 320px,#048bf5 360px,#0487f5 400px,#0482f5 440px,#057ff6 480px,#057df6 520px,#057af5 560px,#0578f4 600px,#0574f2 640px,#0571ef 680px,#056eee 720px,#056eee 760px)"></i>
<i style="top:42px;background:linear-gradient(90deg,#04a7fc 0px,#04a6fb 40px,#04a4f9 80px,#04a2f6 120px,#049ff4 160px,#049df4 200px,#0499f4 240px,#0495f4 280px,#0491f5 320px,#048cf5 360px,#0487f5 400px,#0483f5 440px,#0580f6 480px,#057df6 520px,#057bf6 560px,#0578f4 600px,#0575f2 640px,#0571ef 680px,#056eee 720px,#056eee 760px)"></i>
<i style="top:48px;background:linear-gradient(90deg,#04a8fc 0px,#04a7fb 40px,#04a5f9 80px,#04a3f6 120px,#04a0f4 160px,#049df4 200px,#049af4 240px,#0496f5 280px,#0491f5 320px,#048cf6 360px,#0488f6 400px,#0483f5 440px,#0580f6 480px,#057ef7 520px,#057bf6 560px,#0578f4 600px,#0575f2 640px,#0572ef 680px,#056eee 720px,#056eee 760px)"></i>
<i style="top:54px;background:linear-gradient(90deg,#04a9fc 0px,#04a8fb 40px,#04a6f9 80px,#04a3f7 120px,#04a1f5 160px,#049ef5 200px,#049af5 240px,#0496f5 280px,#0492f6 320px,#048df6 360px,#0488f6 400px,#0483f5 440px,#0580f6 480px,#057ef7 520px,#057cf6 560px,#0579f4 600px,#0576f2 640px,#0572ef 680px,#056fee 720px,#056fee 760px)"></i>
<i style="top:60px;background:linear-gradient(90deg,#04a9fc 0px,#04a9fb 40px,#04a7f9 80px,#04a4f7 120px,#04a2f5 160px,#049ff5 200px,#049bf5 240px,#0497f5 280px,#0492f6 320px,#048ef6 360px,#0489f6 400px,#0484f5 440px,#0581f6 480px,#057ff7 520px,#057cf6 560px,#0579f4 600px,#0576f1 640px,#0572ef 680px,#056fed 720px,#056fed 760px)"></i>
<i style="top:66px;background:linear-gradient(90deg,#04aafc 0px,#04aafc 40px,#04a7fa 80px,#04a5f8 120px,#04a2f6 160px,#04a0f5 200px,#049cf5 240px,#0498f5 280px,#0493f6 320px,#048ef7 360px,#0489f6 400px,#0484f5 440px,#0581f7 480px,#057ff8 520px,#067df6 560px,#057af4 600px,#0576f1 640px,#0573ef 680px,#056fed 720px,#056fed 760px)"></i>
<i style="top:72px;background:linear-gradient(90deg,#04abfc 0px,#04aafc 40px,#04a8fa 80px,#04a5f8 120px,#04a3f7 160px,#04a0f6 200px,#049cf5 240px,#0498f6 280px,#0494f6 320px,#048ff7 360px,#048af6 400px,#0485f5 440px,#0582f7 480px,#0580f8 520px,#067df6 560px,#067af4 600px,#0577f1 640px,#0573ef 680px,#0570ed 720px,#0570ed 760px)"></i>
<i style="top:78px;background:linear-gradient(90deg,#04acfc 0px,#04abfc 40px,#04a9fa 80px,#04a6f8 120px,#04a4f7 160px,#04a1f6 200px,#049df6 240px,#0499f6 280px,#0494f6 320px,#048ff7 360px,#048af7 400px,#0485f5 440px,#0582f7 480px,#0680f8 520px,#067ef7 560px,#067bf4 600px,#0577f1 640px,#0573ef 680px,#0570ed 720px,#0570ed 760px)"></i>
<i style="top:84px;background:linear-gradient(90deg,#04acfc 0px,#04acfc 40px,#04a9fb 80px,#04a7f9 120px,#04a4f8 160px,#04a1f7 200px,#049ef6 240px,#0499f6 280px,#0495f7 320px,#0490f7 360px,#048bf7 400px,#0485f5 440px,#0583f7 480px,#0681f9 520px,#067ef7 560px,#067bf4 600px,#0578f1 640px,#0574ef 680px,#0570ed 720px,#0570ed 760px)"></i>
<i style="top:90px;background:linear-gradient(90deg,#04adfd 0px,#04acfc 40px,#04aafb 80px,#04a7f9 120px,#04a5f8 160px,#04a2f7 200px,#049ef6 240px,#049af6 280px,#0495f7 320px,#0491f8 360px,#048bf7 400px,#0486f5 440px,#0583f8 480px,#0681f9 520px,#067ff7 560px,#067cf4 600px,#0678f1 640px,#0574ef 680px,#0570ed 720px,#0570ed 760px)"></i>
<i style="top:96px;background:linear-gradient(90deg,#04adfd 0px,#04adfc 40px,#04aafb 80px,#04a8fa 120px,#04a6f9 160px,#04a3f8 200px,#049ff6 240px,#049af6 280px,#0496f7 320px,#0491f8 360px,#048cf8 400px,#0486f5 440px,#0584f8 480px,#0682f9 520px,#067ff7 560px,#067cf4 600px,#0678f1 640px,#0574ef 680px,#0571ed 720px,#0571ed 760px)"></i>
<i style="top:102px;background:linear-gradient(90deg,#04aefd 0px,#04adfc 40px,#04abfb 80px,#04a8fa 120px,#04a6f9 160px,#04a3f8 200px,#049ff7 240px,#049bf6 280px,#0497f7 320px,#0492f8 360px,#048df8 400px,#0487f5 440px,#0584f8 480px,#0682fa 520px,#0680f7 560px,#067df4 600px,#0679f1 640px,#0575ee 680px,#0571ed 720px,#0571ed 760px)"></i>
<i style="top:108px;background:linear-gradient(90deg,#04aefd 0px,#04adfc 40px,#04abfb 80px,#04a9fb 120px,#04a6fa 160px,#04a4f8 200px,#04a0f7 240px,#049cf7 280px,#0497f7 320px,#0493f8 360px,#048df8 400px,#0487f5 440px,#0585f9 480px,#0683fa 520px,#0680f7 560px,#067df3 600px,#0679f1 640px,#0675ee 680px,#0571ec 720px,#0571ec 760px)"></i>
<i style="top:114px;background:linear-gradient(90deg,#04aefd 0px,#04aefd 40px,#04acfc 80px,#04a9fb 120px,#04a7fa 160px,#04a4f8 200px,#04a0f7 240px,#049cf7 280px,#0498f7 320px,#0493f8 360px,#048ef9 400px,#0487f5 440px,#0585f9 480px,#0684fa 520px,#0681f7 560px,#067df3 600px,#067af0 640px,#0675ee 680px,#0572ec 720px,#0572ec 760px)"></i>
<i style="top:120px;background:linear-gradient(90deg,#04aefd 0px,#04aefd 40px,#04acfc 80px,#04a9fb 120px,#04a7fa 160px,#04a4f8 200px,#04a1f7 240px,#049df7 280px,#0498f7 320px,#0494f9 360px,#048ff9 400px,#0488f4 440px,#0686fa 480px,#0684fa 520px,#0681f7 560px,#067ef3 600px,#067af0 640px,#0676ee 680px,#0672ec 720px,#0672ec 760px)"></i>
<i style="top:126px;background:linear-gradient(90deg,#04affd 0px,#04aefd 40px,#04acfc 80px,#04aafb 120px,#04a7fa 160px,#04a5f8 200px,#04a1f7 240px,#049df7 280px,#0499f7 320px,#0494f9 360px,#048ff9 400px,#0489f5 440px,#0687fb 480px,#0685fb 520px,#0682f6 560px,#067ef3 600px,#067af0 640px,#0676ee 680px,#0672ec 720px,#0672ec 760px)"></i>
<i style="top:132px;background:linear-gradient(90deg,#04affd 0px,#04aefd 40px,#04acfc 80px,#04aafc 120px,#04a8fb 160px,#04a5f9 200px,#04a2f7 240px,#049ef7 280px,#0499f7 320px,#0495f9 360px,#0490f9 400px,#048af5 440px,#0688fb 480px,#0685fb 520px,#0682f6 560px,#067ff2 600px,#067bf0 640px,#0676ed 680px,#0672ec 720px,#0672ec 760px)"></i>
<i style="top:138px;background:linear-gradient(90deg,#04affd 0px,#04aefd 40px,#04adfc 80px,#04aafc 120px,#04a8fb 160px,#04a6f9 200px,#04a2f7 240px,#049ef7 280px,#049af7 320px,#0496f9 360px,#0491f9 400px,#048bf6 440px,#0688fc 480px,#0686fb 520px,#0683f6 560px,#067ff2 600px,#067bef 640px,#0676ed 680px,#0672ec 720px,#0672ec 760px)"></i>
<i style="top:144px;background:linear-gradient(90deg,#04affd 0px,#04aefd 40px,#04adfc 80px,#04abfc 120px,#04a8fb 160px,#04a6f9 200px,#04a3f7 240px,#049ff7 280px,#049af7 320px,#0496f9 360px,#0492f9 400px,#048cf7 440px,#0689fc 480px,#0686fa 520px,#0683f6 560px,#067ff2 600px,#067bef 640px,#0677ed 680px,#0673eb 720px,#0673eb 760px)"></i>
<i style="top:150px;background:linear-gradient(90deg,#04affd 0px,#04affd 40px,#04adfd 80px,#04abfc 120px,#04a9fb 160px,#04a7f9 200px,#04a3f7 240px,#049ff7 280px,#049bf7 320px,#0497f9 360px,#0492f9 400px,#048df7 440px,#0689fb 480px,#0687fa 520px,#0684f5 560px,#0680f2 600px,#067bef 640px,#0677ed 680px,#0673eb 720px,#0673eb 760px)"></i>
<i style="top:156px;background:linear-gradient(90deg,#04affd 0px,#04affd 40px,#04adfd 80px,#04abfc 120px,#04a9fb 160px,#04a7f9 200px,#04a4f7 240px,#04a0f7 280px,#049bf7 320px,#0497f8 360px,#0493f9 400px,#048df8 440px,#068afb 480px,#0687fa 520px,#0684f5 560px,#0680f1 600px,#067cef 640px,#0677ed 680px,#0673eb 720px,#0673eb 760px)"></i>
<i style="top:162px;background:linear-gradient(90deg,#04affd 0px,#04affd 40px,#04adfd 80px,#04acfd 120px,#04aafb 160px,#04a8f9 200px,#04a4f7 240px,#04a0f7 280px,#049cf7 320px,#0498f8 360px,#0494f9 400px,#058ef8 440px,#068afa 480px,#0688f9 520px,#0684f4 560px,#0680f1 600px,#067cee 640px,#0677ec 680px,#0673eb 720px,#0673eb 760px)"></i>
<i style="top:168px;background:linear-gradient(90deg,#04affd 0px,#04affd 40px,#04aefd 80px,#04acfd 120px,#04aafb 160px,#04a8f9 200px,#04a5f7 240px,#04a0f7 280px,#049cf7 320px,#0498f8 360px,#0494f9 400px,#058ff8 440px,#068bfa 480px,#0688f9 520px,#0685f4 560px,#0681f1 600px,#067cee 640px,#0677ec 680px,#0673eb 720px,#0673eb 760px)"></i>
<i style="top:174px;background:linear-gradient(90deg,#04affd 0px,#04affd 40px,#04aefd 80px,#04acfd 120px,#04abfc 160px,#04a9f9 200px,#04a5f7 240px,#04a1f7 280px,#049cf7 320px,#0498f8 360px,#0495f9 400px,#0590f8 440px,#068bf9 480px,#0788f8 520px,#0685f4 560px,#0681f0 600px,#067cee 640px,#0678ec 680px,#0673ea 720px,#0673ea 760px)"></i>
<i style="top:180px;background:linear-gradient(90deg,#04affd 0px,#04affd 40px,#04aefd 80px,#04adfd 120px,#04abfc 160px,#04a9f9 200px,#04a6f7 240px,#04a1f7 280px,#049df7 320px,#0499f7 360px,#0495f8 400px,#0590f8 440px,#068cf9 480px,#0789f7 520px,#0685f3 560px,#0681f0 600px,#067dee 640px,#0678ec 680px,#0673ea 720px,#0673ea 760px)"></i>
<i style="top:186px;background:linear-gradient(90deg,#04affd 0px,#04affc 40px,#04aefd 80px,#04adfd 120px,#04acfc 160px,#04aaf9 200px,#04a6f8 240px,#04a2f7 280px,#049df6 320px,#0499f7 360px,#0496f8 400px,#0590f7 440px,#068cf8 480px,#0789f7 520px,#0686f3 560px,#0681f0 600px,#067ded 640px,#0678eb 680px,#0674ea 720px,#0674ea 760px)"></i>
<i style="top:192px;background:linear-gradient(90deg,#04affc 0px,#04affc 40px,#04affd 80px,#04aefd 120px,#04acfc 160px,#04aafa 200px,#04a7f8 240px,#04a2f7 280px,#049df6 320px,#0499f6 360px,#0496f7 400px,#0590f7 440px,#068cf7 480px,#0789f6 520px,#0686f2 560px,#0682ef 600px,#067ded 640px,#0678eb 680px,#0674ea 720px,#0674ea 760px)"></i>
<i style="top:198px;background:linear-gradient(90deg,#04affc 0px,#04affc 40px,#04affd 80px,#04aefd 120px,#04adfc 160px,#04abfa 200px,#04a8f8 240px,#04a3f7 280px,#049df6 320px,#0499f6 360px,#0496f7 400px,#0590f6 440px,#068cf7 480px,#078af5 520px,#0686f2 560px,#0682ef 600px,#067ded 640px,#0678eb 680px,#0674e9 720px,#0674e9 760px)"></i>
<i style="top:204px;background:linear-gradient(90deg,#04affc 0px,#04affc 40px,#04affd 80px,#04affd 120px,#04aefc 160px,#04acfa 200px,#04a8f9 240px,#04a3f7 280px,#049df6 320px,#0499f6 360px,#0496f6 400px,#0590f6 440px,#068df6 480px,#078af5 520px,#0686f1 560px,#0682ee 600px,#067dec 640px,#0678eb 680px,#0674e9 720px,#0674e9 760px)"></i>
<i style="top:210px;background:linear-gradient(90deg,#04b0fc 0px,#04affc 40px,#04affd 80px,#04affd 120px,#04aefc 160px,#04acfa 200px,#04a9f9 240px,#04a3f7 280px,#049ef5 320px,#049af5 360px,#0496f6 400px,#0690f5 440px,#068df6 480px,#078af4 520px,#0686f1 560px,#0682ee 600px,#067dec 640px,#0678ea 680px,#0674e9 720px,#0674e9 760px)"></i>
<i style="top:216px;background:linear-gradient(90deg,#04b0fc 0px,#04affc 40px,#04b0fd 80px,#04b0fd 120px,#04affc 160px,#04adfb 200px,#04a9f9 240px,#04a4f7 280px,#049ef5 320px,#049af5 360px,#0496f5 400px,#0690f4 440px,#078df5 480px,#078af4 520px,#0687f1 560px,#0682ee 600px,#067dec 640px,#0678ea 680px,#0674e9 720px,#0674e9 760px)"></i>
<i style="top:222px;background:linear-gradient(90deg,#04b0fc 0px,#04b0fc 40px,#04b0fd 80px,#04b0fd 120px,#04b0fd 160px,#04adfb 200px,#04aafa 240px,#04a4f7 280px,#049ef5 320px,#049af4 360px,#0496f5 400px,#0690f4 440px,#078ef5 480px,#078bf3 520px,#0687f0 560px,#0682ed 600px,#067deb 640px,#0678ea 680px,#0674e9 720px,#0674e9 760px)"></i>
<i style="top:228px;background:linear-gradient(90deg,#04b0fc 0px,#04b0fc 40px,#04b0fd 80px,#04b1fd 120px,#04b0fd 160px,#04aefb 200px,#04aafa 240px,#04a4f7 280px,#049ef4 320px,#049af4 360px,#0496f5 400px,#0690f4 440px,#068ef5 480px,#078bf3 520px,#0687f0 560px,#0682ed 600px,#067deb 640px,#0678ea 680px,#0674e8 720px,#0674e8 760px)"></i>
<i style="top:234px;background:linear-gradient(90deg,#04b0fc 0px,#04b0fc 40px,#04b1fd 80px,#04b1fd 120px,#04b1fd 160px,#04affc 200px,#04abfa 240px,#04a5f7 280px,#049ef4 320px,#049af4 360px,#0496f5 400px,#0691f5 440px,#068ef5 480px,#078bf2 520px,#0687ef 560px,#0682ed 600px,#067deb 640px,#0678e9 680px,#0673e8 720px,#0673e8 760px)"></i>
<i style="top:240px;background:linear-gradient(90deg,#04b0fc 0px,#04b0fc 40px,#04b1fd 80px,#04b2fd 120px,#04b1fd 160px,#04affc 200px,#04abfa 240px,#04a5f7 280px,#049ff4 320px,#049af3 360px,#0496f5 400px,#0692f5 440px,#068ff5 480px,#068bf2 520px,#0687ee 560px,#0682ec 600px,#067deb 640px,#0678e9 680px,#0673e8 720px,#0673e8 760px)"></i>
<i style="top:246px;background:linear-gradient(90deg,#04b1fc 0px,#04b0fc 40px,#04b1fd 80px,#04b2fd 120px,#04b2fd 160px,#04b0fc 200px,#04acfa 240px,#04a6f7 280px,#049ff4 320px,#049af3 360px,#0497f5 400px,#0593f6 440px,#068ff5 480px,#068cf1 520px,#0687ee 560px,#0682ec 600px,#067dea 640px,#0678e9 680px,#0673e8 720px,#0673e8 760px)"></i>
<i style="top:252px;background:linear-gradient(90deg,#04b1fc 0px,#04b1fc 40px,#04b2fd 80px,#04b3fe 120px,#04b2fd 160px,#04b0fc 200px,#04acfb 240px,#04a6f7 280px,#049ff4 320px,#049af3 360px,#0497f5 400px,#0594f7 440px,#0690f5 480px,#068cf1 520px,#0687ed 560px,#0682eb 600px,#067dea 640px,#0678e9 680px,#0673e7 720px,#0673e7 760px)"></i>
<i style="top:258px;background:linear-gradient(90deg,#04b1fc 0px,#04b1fc 40px,#04b2fd 80px,#04b3fe 120px,#04b3fd 160px,#04b0fc 200px,#04acfb 240px,#04a6f7 280px,#04a0f4 320px,#049bf3 360px,#0497f5 400px,#0594f8 440px,#0690f6 480px,#068cf0 520px,#0687ed 560px,#0682eb 600px,#067dea 640px,#0677e8 680px,#0673e7 720px,#0673e7 760px)"></i>
<i style="top:264px;background:linear-gradient(90deg,#04b2fc 0px,#04b2fc 40px,#04b3fd 80px,#04b4fe 120px,#04b3fe 160px,#04b1fc 200px,#04adfa 240px,#04a7f7 280px,#04a0f4 320px,#049bf2 360px,#0497f5 400px,#0595f9 440px,#0691f6 480px,#068cf0 520px,#0687ec 560px,#0682eb 600px,#067ce9 640px,#0677e8 680px,#0673e7 720px,#0673e7 760px)"></i>
<i style="top:270px;background:linear-gradient(90deg,#04b2fc 0px,#04b2fc 40px,#04b3fd 80px,#04b4fe 120px,#04b4fe 160px,#04b1fc 200px,#04adfa 240px,#04a7f7 280px,#04a0f4 320px,#049bf2 360px,#0498f5 400px,#0596fa 440px,#0691f6 480px,#068cef 520px,#0687ec 560px,#0681ea 600px,#067ce9 640px,#0677e8 680px,#0672e7 720px,#0672e7 760px)"></i>
<i style="top:276px;background:linear-gradient(90deg,#04b2fd 0px,#04b2fd 40px,#04b3fd 80px,#04b5fe 120px,#04b4fe 160px,#04b2fc 200px,#04adfa 240px,#04a7f7 280px,#04a1f4 320px,#049bf2 360px,#0498f5 400px,#0497fb 440px,#0692f5 480px,#068bee 520px,#0686eb 560px,#0681ea 600px,#067ce9 640px,#0677e8 680px,#0672e7 720px,#0672e7 760px)"></i>
<i style="top:282px;background:linear-gradient(90deg,#04b3fd 0px,#04b3fd 40px,#04b4fd 80px,#04b5fe 120px,#04b5fe 160px,#04b2fc 200px,#04adfa 240px,#04a7f7 280px,#04a1f4 320px,#049bf2 360px,#0498f5 400px,#0497fc 440px,#0692f5 480px,#068bed 520px,#0686eb 560px,#0681ea 600px,#067ce9 640px,#0676e7 680px,#0672e6 720px,#0672e6 760px)"></i>
<i style="top:288px;background:linear-gradient(90deg,#04b3fd 0px,#04b3fd 40px,#04b4fd 80px,#04b5fe 120px,#04b5fe 160px,#04b2fc 200px,#04aefa 240px,#04a8f7 280px,#04a2f4 320px,#049cf2 360px,#0498f5 400px,#0498fc 440px,#0692f4 480px,#068bec 520px,#0685ea 560px,#0680e9 600px,#067be8 640px,#0676e7 680px,#0672e6 720px,#0672e6 760px)"></i>
<i style="top:294px;background:linear-gradient(90deg,#04b3fd 0px,#04b3fd 40px,#04b4fd 80px,#04b6fe 120px,#04b5fe 160px,#04b2fc 200px,#04aefa 240px,#04a8f7 280px,#04a2f4 320px,#049cf2 360px,#0498f4 400px,#0498fc 440px,#0691f3 480px,#068aeb 520px,#0685e9 560px,#0680e9 600px,#067be8 640px,#0676e7 680px,#0671e6 720px,#0671e6 760px)"></i>
<i style="top:300px;background:linear-gradient(90deg,#04b4fd 0px,#04b4fd 40px,#04b4fd 80px,#04b6fe 120px,#04b5fe 160px,#04b2fc 200px,#04aefa 240px,#04a8f7 280px,#04a2f4 320px,#049cf2 360px,#0498f3 400px,#0498fb 440px,#0691f2 480px,#0689ea 520px,#0684e9 560px,#067fe9 600px,#067ae8 640px,#0675e7 680px,#0671e6 720px,#0671e6 760px)"></i>
<i style="top:306px;background:linear-gradient(90deg,#04b4fd 0px,#04b4fd 40px,#04b5fd 80px,#04b6fe 120px,#04b5fe 160px,#04b3fc 200px,#04aefa 240px,#04a8f7 280px,#04a3f5 320px,#049df2 360px,#0498f3 400px,#0497f8 440px,#0690f1 480px,#0688e9 520px,#0683e9 560px,#067fe8 600px,#067ae8 640px,#0675e7 680px,#0671e6 720px,#0671e6 760px)"></i>
<i style="top:312px;background:linear-gradient(90deg,#04b4fd 0px,#04b4fd 40px,#04b5fd 80px,#04b6fe 120px,#04b5fd 160px,#04b3fc 200px,#04aefa 240px,#04a8f7 280px,#04a3f5 320px,#049df2 360px,#0498f1 400px,#0496f6 440px,#068fef 480px,#0687e8 520px,#0682e8 560px,#067ee8 600px,#0679e7 640px,#0674e6 680px,#0670e5 720px,#0670e5 760px)"></i>
<i style="top:318px;background:linear-gradient(90deg,#04b5fd 0px,#04b5fd 40px,#04b5fd 80px,#04b6fe 120px,#04b5fd 160px,#04b3fc 200px,#04aefa 240px,#04a9f7 280px,#04a3f5 320px,#049ef2 360px,#0497f0 400px,#0495f3 440px,#068eee 480px,#0686e7 520px,#0681e8 560px,#067de8 600px,#0679e7 640px,#0674e6 680px,#0670e5 720px,#0670e5 760px)"></i>
<i style="top:324px;background:linear-gradient(90deg,#04b5fd 0px,#04b5fd 40px,#04b5fd 80px,#04b6fd 120px,#04b5fd 160px,#04b3fc 200px,#04aef9 240px,#04a8f7 280px,#04a4f5 320px,#049ef2 360px,#0497ef 400px,#0594f0 440px,#068dec 480px,#0684e7 520px,#0680e8 560px,#067ce8 600px,#0678e7 640px,#0673e6 680px,#066fe5 720px,#066fe5 760px)"></i>
<i style="top:330px;background:linear-gradient(90deg,#04b5fd 0px,#04b5fd 40px,#04b5fd 80px,#04b6fd 120px,#04b5fd 160px,#04b3fc 200px,#04aef9 240px,#04a8f6 280px,#04a4f5 320px,#049ef2 360px,#0497ee 400px,#0593ee 440px,#068ceb 480px,#0683e6 520px,#067fe8 560px,#067ce8 600px,#0677e7 640px,#0673e6 680px,#066fe5 720px,#066fe5 760px)"></i>
<i style="top:336px;background:linear-gradient(90deg,#04b5fd 0px,#04b5fd 40px,#04b5fd 80px,#04b6fd 120px,#04b5fd 160px,#04b2fc 200px,#04aef9 240px,#04a8f6 280px,#04a4f4 320px,#049ef2 360px,#0497ed 400px,#0593ec 440px,#068aea 480px,#0681e5 520px,#067ee7 560px,#067be7 600px,#0677e7 640px,#0672e6 680px,#066fe5 720px,#066fe5 760px)"></i>
<i style="top:342px;background:linear-gradient(90deg,#04b6fe 0px,#04b5fd 40px,#04b5fd 80px,#04b5fd 120px,#04b5fd 160px,#04b2fb 200px,#04aef9 240px,#04a8f6 280px,#04a4f4 320px,#049ef2 360px,#0496ed 400px,#0592eb 440px,#0689e9 480px,#067fe5 520px,#067ce7 560px,#067ae7 600px,#0676e6 640px,#0672e5 680px,#066ee4 720px,#066ee4 760px)"></i>
<i style="top:348px;background:linear-gradient(90deg,#04b6fe 0px,#04b6fd 40px,#04b5fd 80px,#04b5fd 120px,#04b5fd 160px,#04b2fb 200px,#04aef9 240px,#04a8f5 280px,#04a3f4 320px,#049ef1 360px,#0496ec 400px,#0591ea 440px,#0688e9 480px,#067ee5 520px,#067be7 560px,#0679e7 600px,#0675e6 640px,#0671e5 680px,#066ee4 720px,#066ee4 760px)"></i>
<i style="top:354px;background:linear-gradient(90deg,#04b6fe 0px,#04b6fd 40px,#04b5fd 80px,#04b5fd 120px,#04b4fc 160px,#04b2fb 200px,#04adf8 240px,#04a7f5 280px,#04a3f3 320px,#049ef1 360px,#0496ec 400px,#0691e9 440px,#0687e9 480px,#067de5 520px,#067ae7 560px,#0678e7 600px,#0675e6 640px,#0671e5 680px,#066de4 720px,#066de4 760px)"></i>
<i style="top:360px;background:linear-gradient(90deg,#04b6fe 0px,#04b6fe 40px,#04b5fd 80px,#04b5fd 120px,#04b4fc 160px,#04b2fb 200px,#04adf8 240px,#04a7f4 280px,#04a2f3 320px,#049ef1 360px,#0496eb 400px,#0690e9 440px,#0686e9 480px,#067ce5 520px,#0679e6 560px,#0677e7 600px,#0674e6 640px,#0670e5 680px,#066de4 720px,#066de4 760px)"></i>
<i style="top:366px;background:linear-gradient(90deg,#04b7fe 0px,#04b6fe 40px,#04b5fd 80px,#04b5fc 120px,#04b4fc 160px,#04b2fb 200px,#04adf8 240px,#04a6f4 280px,#04a1f2 320px,#049df0 360px,#0595eb 400px,#068fe9 440px,#0686e9 480px,#067be5 520px,#0678e6 560px,#0676e6 600px,#0673e6 640px,#0670e5 680px,#066ce4 720px,#066ce4 760px)"></i>
<i style="top:372px;background:linear-gradient(90deg,#04b7fe 0px,#04b6fe 40px,#04b5fd 80px,#04b4fc 120px,#04b4fc 160px,#04b2fb 200px,#04adf8 240px,#04a5f3 280px,#04a0f0 320px,#049cef 360px,#0595ea 400px,#068fe9 440px,#0685e9 480px,#067be6 520px,#0678e6 560px,#0675e6 600px,#0673e5 640px,#066fe4 680px,#066ce4 720px,#066ce4 760px)"></i>
<i style="top:378px;background:linear-gradient(90deg,#04b7fe 0px,#04b7fe 40px,#04b5fd 80px,#04b4fc 120px,#04b4fc 160px,#04b2fb 200px,#04adf7 240px,#04a5f2 280px,#049eef 320px,#049bee 360px,#0594ea 400px,#068ee9 440px,#0684e9 480px,#067be6 520px,#0677e6 560px,#0675e6 600px,#0672e5 640px,#066fe4 680px,#066be3 720px,#066be3 760px)"></i>
<i style="top:384px;background:linear-gradient(90deg,#04b7fe 0px,#04b7fe 40px,#04b5fd 80px,#04b4fc 120px,#04b4fc 160px,#04b2fa 200px,#04adf7 240px,#04a4f2 280px,#049cee 320px,#0499ed 360px,#0593ea 400px,#068de8 440px,#0684e9 480px,#067ae6 520px,#0676e6 560px,#0674e6 600px,#0671e5 640px,#066ee4 680px,#066be3 720px,#066be3 760px)"></i>
<i style="top:390px;background:linear-gradient(90deg,#04b8fe 0px,#04b7fe 40px,#04b6fd 80px,#04b4fc 120px,#04b4fc 160px,#04b2fa 200px,#04adf7 240px,#04a4f1 280px,#049bec 320px,#0498ec 360px,#0592e9 400px,#068ce8 440px,#0683e8 480px,#067ae6 520px,#0676e6 560px,#0673e5 600px,#0671e5 640px,#066de4 680px,#066ae3 720px,#066ae3 760px)"></i>
<i style="top:396px;background:linear-gradient(90deg,#04b8fe 0px,#04b7fe 40px,#04b6fd 80px,#04b4fc 120px,#04b4fc 160px,#04b2fa 200px,#04adf7 240px,#04a3f1 280px,#0499eb 320px,#0497eb 360px,#0591e9 400px,#068be8 440px,#0682e8 480px,#067ae6 520px,#0675e5 560px,#0673e5 600px,#0670e5 640px,#066de4 680px,#066ae3 720px,#066ae3 760px)"></i>
<i style="top:402px;background:linear-gradient(90deg,#04b8fe 0px,#04b7fe 40px,#04b6fd 80px,#04b4fc 120px,#04b4fb 160px,#04b2fa 200px,#04acf7 240px,#04a3f0 280px,#0498ea 320px,#0495ea 360px,#0591e8 400px,#068ae8 440px,#0682e8 480px,#0679e6 520px,#0675e5 560px,#0672e5 600px,#066fe4 640px,#066ce4 680px,#066ae3 720px,#066ae3 760px)"></i>
<i style="top:408px;background:linear-gradient(90deg,#04b8fe 0px,#04b8fe 40px,#04b6fd 80px,#04b4fc 120px,#04b4fb 160px,#04b2fa 200px,#04acf7 240px,#04a2f0 280px,#0497e9 320px,#0494e9 360px,#0590e8 400px,#068ae8 440px,#0681e8 480px,#0679e6 520px,#0674e5 560px,#0672e5 600px,#066fe4 640px,#066ce3 680px,#0669e3 720px,#0669e3 760px)"></i>
<i style="top:414px;background:linear-gradient(90deg,#04b8fe 0px,#04b8fe 40px,#04b6fd 80px,#04b4fc 120px,#04b4fb 160px,#04b2fa 200px,#04acf6 240px,#04a2f0 280px,#0497e9 320px,#0493e8 360px,#058fe7 400px,#0689e7 440px,#0681e7 480px,#0679e6 520px,#0674e5 560px,#0671e5 600px,#066ee4 640px,#066be3 680px,#0669e2 720px,#0669e2 760px)"></i>
<i style="top:420px;background:linear-gradient(90deg,#04b9fe 0px,#04b8fe 40px,#04b6fd 80px,#04b5fc 120px,#04b4fb 160px,#04b2fa 200px,#04acf6 240px,#04a2ef 280px,#0497e9 320px,#0492e8 360px,#058ee7 400px,#0688e7 440px,#0680e7 480px,#0678e6 520px,#0674e5 560px,#0671e4 600px,#066ee4 640px,#066be3 680px,#0668e2 720px,#0668e2 760px)"></i>
<i style="top:426px;background:linear-gradient(90deg,#04b9fe 0px,#04b8fe 40px,#04b6fd 80px,#04b5fc 120px,#04b4fb 160px,#04b2fa 200px,#04acf6 240px,#04a1ef 280px,#0497e9 320px,#0492e7 360px,#058de7 400px,#0687e7 440px,#0680e7 480px,#0678e6 520px,#0673e5 560px,#0670e4 600px,#066de4 640px,#066be3 680px,#0668e2 720px,#0668e2 760px)"></i>
<i style="top:432px;background:linear-gradient(90deg,#04b9fe 0px,#04b8fe 40px,#04b6fd 80px,#04b5fc 120px,#04b4fb 160px,#04b2fa 200px,#04acf6 240px,#04a1ef 280px,#0496e8 320px,#0491e7 360px,#058ce6 400px,#0587e6 440px,#067fe6 480px,#0678e5 520px,#0673e5 560px,#0670e4 600px,#066de3 640px,#066ae3 680px,#0667e2 720px,#0667e2 760px)"></i>
<i style="top:438px;background:linear-gradient(90deg,#04b9fe 0px,#04b8fe 40px,#04b6fd 80px,#04b5fc 120px,#04b4fb 160px,#04b1fa 200px,#04acf6 240px,#04a1ef 280px,#0496e8 320px,#0590e6 360px,#058ce6 400px,#0586e6 440px,#067fe6 480px,#0678e5 520px,#0673e4 560px,#066fe4 600px,#066de3 640px,#066ae2 680px,#0667e2 720px,#0667e2 760px)"></i>
<i style="top:444px;background:linear-gradient(90deg,#04b9fe 0px,#04b8fe 40px,#04b7fd 80px,#04b5fc 120px,#04b3fb 160px,#04b1f9 200px,#04acf6 240px,#04a1ef 280px,#0496e9 320px,#0590e6 360px,#058be6 400px,#0585e6 440px,#067ee6 480px,#0677e5 520px,#0672e4 560px,#066fe4 600px,#066ce3 640px,#0669e2 680px,#0667e1 720px,#0667e1 760px)"></i>
<i style="top:450px;background:linear-gradient(90deg,#04b9fe 0px,#04b9fe 40px,#04b7fd 80px,#04b5fc 120px,#04b3fb 160px,#04b1f9 200px,#04acf6 240px,#04a1ef 280px,#0496e9 320px,#0590e6 360px,#058be6 400px,#0585e6 440px,#067ee5 480px,#0677e5 520px,#0672e4 560px,#066fe4 600px,#066ce3 640px,#0669e2 680px,#0666e1 720px,#0666e1 760px)"></i>
<i style="top:456px;background:linear-gradient(90deg,#04b9fe 0px,#04b9fe 40px,#04b7fd 80px,#04b5fc 120px,#04b3fb 160px,#04b1f9 200px,#04abf5 240px,#04a1ef 280px,#0496e9 320px,#058fe6 360px,#058ae5 400px,#0584e5 440px,#067de5 480px,#0677e5 520px,#0672e4 560px,#066ee3 600px,#066be3 640px,#0669e2 680px,#0666e1 720px,#0666e1 760px)"></i>
<i style="top:462px;background:linear-gradient(90deg,#04bafe 0px,#04b9fe 40px,#04b7fd 80px,#04b5fc 120px,#04b3fb 160px,#04b0f9 200px,#04abf5 240px,#04a1ef 280px,#0496e9 320px,#058fe6 360px,#058ae5 400px,#0584e5 440px,#067de5 480px,#0677e4 520px,#0672e4 560px,#066ee3 600px,#066be3 640px,#0668e2 680px,#0666e1 720px,#0666e1 760px)"></i>
<i style="top:468px;background:linear-gradient(90deg,#04bafe 0px,#04b9fe 40px,#04b7fd 80px,#04b5fc 120px,#04b3fa 160px,#04b0f9 200px,#04aaf5 240px,#04a0ef 280px,#0496e9 320px,#058fe6 360px,#0589e5 400px,#0583e5 440px,#067de5 480px,#0677e4 520px,#0672e4 560px,#066ee3 600px,#066be2 640px,#0668e2 680px,#0665e1 720px,#0665e1 760px)"></i>
<i style="top:474px;background:linear-gradient(90deg,#04bafe 0px,#04b9fe 40px,#04b7fd 80px,#04b5fc 120px,#04b3fa 160px,#04b0f8 200px,#04aaf5 240px,#04a0ef 280px,#0496e9 320px,#058fe6 360px,#0589e5 400px,#0583e5 440px,#067ce5 480px,#0676e4 520px,#0671e3 560px,#066ee3 600px,#066ae2 640px,#0667e1 680px,#0665e1 720px,#0665e1 760px)"></i>
</div></div></div>
<!--/WP-->
  <svg width="690" height="440" viewBox="1 18 690 440" style="position:absolute;left:0;top:0">
   <defs>
    <filter id="eglow" x="-5%" y="-5%" width="110%" height="110%"><feGaussianBlur stdDeviation="1.2" result="b"/><feMerge><feMergeNode in="b"/><feMergeNode in="SourceGraphic"/></feMerge></filter>
    <filter id="lglow" x="-5%" y="-50%" width="110%" height="200%"><feGaussianBlur stdDeviation="1.5"/></filter>
    <linearGradient id="ptop" gradientUnits="userSpaceOnUse" x1="0" y1="180" x2="0" y2="256">
     <stop offset="0" stop-color="#22aefe"/>
     <stop offset="1" stop-color="#229efe"/>
    </linearGradient>
    <linearGradient id="pbot" gradientUnits="userSpaceOnUse" x1="0" y1="258" x2="0" y2="300">
     <stop offset="0" stop-color="#229efe"/>
     <stop offset="0.7" stop-color="#22a2fe"/>
     <stop offset="1" stop-color="#24aefd"/>
    </linearGradient>
   </defs>
   <radialGradient id="cglow" gradientUnits="userSpaceOnUse" cx="603" cy="182" r="45"><stop offset="0" stop-color="#1a84ff" stop-opacity="0.55"/><stop offset="1" stop-color="#1a84ff" stop-opacity="0"/></radialGradient>
   <rect x="540" y="130" width="130" height="110" fill="url(#cglow)"/>
   <!-- beam edge highlights -->
   <line x1="0" y1="5.3" x2="601.6" y2="179.2" stroke="#38c8ff" stroke-width="1.2" opacity="0.5"/>
   <line x1="448.8" y1="314.5" x2="0" y2="372.8" stroke="#30d0ff" stroke-width="2.5" opacity="0.35" filter="url(#lglow)"/>
   <line x1="448.8" y1="314.5" x2="0" y2="372.8" stroke="#30c8ff" stroke-width="1" opacity="0.35"/>
   <rect x="514.5" y="190" width="2.8" height="134" fill="#0a78e6" opacity="0.55"/>
   <rect x="448" y="255.6" width="154" height="2.8" fill="#0a78e6" opacity="0.55"/>
   <!-- logo panes -->
   <polygon points="448.8,200.2 514.5,191.2 514.5,255.6 448.8,255.6" fill="url(#ptop)"/>
   <polygon points="517.3,190.8 601.6,179.2 601.6,255.6 517.3,255.6" fill="url(#ptop)"/>
   <polygon points="448.8,258.4 514.5,258.4 514.5,323.4 448.8,314.5" fill="#2299fc"/>
   <polygon points="517.3,258.4 601.6,258.4 601.6,335.3 517.3,323.8" fill="#2299fc"/>
   <polygon points="448.8,258.4 514.5,258.4 514.5,305.2 448.8,314.5" fill="url(#pbot)"/>
   <polygon points="517.3,258.4 601.6,258.4 601.6,293 517.3,304.8" fill="url(#pbot)"/>
   <!-- edges -->
   <g fill="none" stroke-linecap="square" filter="url(#eglow)">
    <path d="M449.2,200.4 V255.2 M449.2,258.8 V314.2" stroke="#34e0ff" stroke-width="1.1" opacity="0.9"/>
    <path d="M601.2,179.6 V255.2 M601.2,258.8 V334.9" stroke="#34e4ff" stroke-width="1.1" opacity="0.95"/>
    <path d="M449.2,314.2 L514.2,323.1 M517.6,323.6 L601.2,334.9" stroke="#34e0ff" stroke-width="1.1" opacity="0.9"/>
    <path d="M449.2,200.4 L514.2,191.5 M517.6,191 L601.2,179.6" stroke="#40d4ff" stroke-width="1.1" opacity="0.8"/>
   </g>
   <g fill="none">
    <path d="M514.2,191.5 V255.2 M514.2,258.8 V323.1 M517.6,191 V255.2 M517.6,258.8 V323.6" stroke="#38c4ff" stroke-width="0.9" opacity="0.5"/>
    <path d="M449.2,255.2 H514.2 M517.6,255.2 H601.2 M449.2,258.8 H514.2 M517.6,258.8 H601.2" stroke="#38c4ff" stroke-width="0.9" opacity="0.4"/>
    <path d="M449.2,314.2 L601.2,293" stroke="#44d0ff" stroke-width="1" opacity="0.6"/>
   </g>
  </svg>
 </div>

 <!-- toolbar -->
 <div class="abs" style="left:146px;top:19px;width:41px;height:28px;background:#ff6a62"></div>
 <div class="tb" style="left:187px;top:19px;width:332px"></div>
 <div class="abs" style="left:519px;top:19px;width:27px;height:26px;background:linear-gradient(180deg,#fff 0px,#fff 19px,#e6e2de 26px)"></div>


 <!-- toolbar icons -->
 <svg class="abs" style="left:0;top:0" width="692" height="60" viewBox="0 0 692 60">
  <defs>
   <filter id="halo" x="-30%" y="-30%" width="160%" height="160%"><feMorphology in="SourceAlpha" operator="dilate" radius="0.9" result="d"/><feFlood flood-color="#0d3a6c"/><feComposite in2="d" operator="in" result="h"/><feMerge><feMergeNode in="h"/><feMergeNode in="SourceGraphic"/></feMerge></filter>
  </defs>
  <!-- disconnect icon -->
  <path d="M164.2,37.5 H160 Q158.9,37.5 158.9,36.4 V26.2 Q158.9,25.1 160,25.1 H173.4 Q174.5,25.1 174.5,26.2 V29.3" fill="none" stroke="#fff" stroke-opacity="0.85" stroke-width="1.9"/>
  <rect x="166" y="30.7" width="9.5" height="10.8" rx="0.8" fill="#fff"/>
  <path d="M168.3,34.3 L172.5,38.5 M172.5,34.3 L168.3,38.5" stroke="#cf2e2e" stroke-width="1.3"/>
  <!-- eye -->
  <g filter="url(#halo)">
   <path d="M197.4,33.1 Q208,17.6 218.6,33.1 Q208,48.6 197.4,33.1 Z" fill="#0f3f75" stroke="#fff" stroke-opacity="0.88" stroke-width="1.6"/>
  </g>
  <ellipse cx="208" cy="33.1" rx="5.1" ry="5.6" fill="#fff"/>
  <path d="M222.7,46.5 L229,40 L229,46.5 Z" fill="#fff"/>
  <!-- pointer -->
  <g filter="url(#halo)">
   <ellipse cx="249.5" cy="33" rx="7.3" ry="8.1" fill="#0f3f75" stroke="#fff" stroke-opacity="0.9" stroke-width="1.6"/>
  </g>
  <path d="M249.4,32.6 L249.6,38.6 L251.1,37.1 L252.8,39.6 L254,38.8 L252.4,36.4 L254.6,36.2 Z" fill="#fff"/>
  <path d="M246.2,28.6 L247.2,30.4 M250.6,28.6 L250.4,30.6 M245.2,33.8 L246.8,33.6" stroke="#fff" stroke-width="1.1"/>
  <path d="M265,46.2 L270.1,40.2 L270.1,46.2 Z" fill="#fff"/>
  <!-- arrows -->
  <g filter="url(#halo)" fill="none" stroke="#fff" stroke-width="1.9" stroke-linecap="round" stroke-linejoin="round">
   <path d="M296.2,29.8 H285.6 M289.4,26.2 L285.6,29.8 L289.4,33.4"/>
   <path d="M285.4,36.9 H296.2 M292.4,33.4 L296.2,36.9 L292.4,40.5"/>
  </g>
  <!-- ACD keys -->
  <g filter="url(#halo)">
   <rect x="328.3" y="23.2" width="8.7" height="8.4" rx="1.6" fill="#fff"/>
   <rect x="323.3" y="32.7" width="9" height="9" rx="1.6" fill="#fff"/>
   <rect x="333.3" y="32.7" width="9" height="9" rx="1.6" fill="#fff"/>
  </g>
  <text x="332.7" y="30.4" font-family="Liberation Sans" font-size="7" fill="#4a80b0" text-anchor="middle">A</text>
  <text x="327.8" y="40" font-family="Liberation Sans" font-size="7" fill="#4a80b0" text-anchor="middle">C</text>
  <text x="337.8" y="40" font-family="Liberation Sans" font-size="7" fill="#4a80b0" text-anchor="middle">D</text>
  <!-- expand -->
  <g filter="url(#halo)">
   <path d="M368.4,25.8 L379.7,39.3 M379.7,25.8 L368.4,39.3" stroke="#fff" stroke-width="1.25"/>
   <path d="M367.3,24.4 L371.6,24.8 L367.7,28.8 Z M380.8,24.4 L376.5,24.8 L380.4,28.8 Z M367.3,40.7 L371.6,40.3 L367.7,36.3 Z M380.8,40.7 L376.5,40.3 L380.4,36.3 Z" fill="#fff"/>
  </g>
  <!-- chat -->
  <g filter="url(#halo)">
   <path d="M412,35.7 H423.4 V26.5" fill="none" stroke="#fff" stroke-width="1.5"/>
   <path d="M418.2,35.7 L421.8,41 L422.6,35.7 Z" fill="#fff"/>
   <path d="M406,24.8 H421.6 V34.5 H411.6 L408.6,38.2 L408.4,34.5 H406 Z" fill="#fff"/>
  </g>
  <!-- signature -->
  <path d="M460.2,26.1 H446.8 Q445.9,26.1 445.9,27 V40.3 Q445.9,41.2 446.8,41.2 H465.1 Q466,41.2 466,40.3 V29.4" fill="none" stroke="#d2dde8" stroke-width="1.5"/>
  <path d="M448,32.8 Q450.5,30 453,32.5 Q455.5,36.5 458.5,33.5" fill="none" stroke="#e8eef4" stroke-width="1.4" stroke-linecap="round"/>
  <path d="M458.6,33.2 L464,24.6 Q465.2,23 466.3,24 Q467.2,25 466.2,26.3 L460.8,34.6 Z" fill="none" stroke="#e8eef4" stroke-width="1.2" stroke-linejoin="round"/>
  <!-- record -->
  <ellipse cx="497.5" cy="33" rx="7.6" ry="8.2" fill="none" stroke="#fff" stroke-width="2"/>
  <ellipse cx="497.5" cy="32.8" rx="4.5" ry="4.9" fill="#fff"/>
  <!-- chevron -->
  <path d="M525.9,35.2 L532.2,28.6 L538.4,35.2" fill="none" stroke="#1b3c6e" stroke-width="1.8"/>
 </svg>
 <!-- light blue rect -->
 <div class="abs" style="left:366px;top:45px;width:181px;height:42px;background:#94c8f6"></div>

 <!-- main menu -->
 <div class="menu" style="left:232px;top:46px;width:153px;height:149px;border:1px solid #fbf5ee">
  <div class="abs" style="left:1px;top:1px;width:149px;height:17px;background:#94c8f6"></div>
  <div class="mi" style="left:26.5px;top:4.4px">Lock</div>
  <div class="mi" style="left:26.5px;top:21.7px;letter-spacing:-0.25px">Blank Host Screen</div>
  <div class="mi" style="left:26.5px;top:39px;letter-spacing:-0.32px">Take Screenshot</div>
  <div class="mi" style="left:26.5px;top:56.3px;letter-spacing:-0.13px">Block Remote Input</div>
  <div class="mi" style="left:26.5px;top:73.2px;letter-spacing:-0.1px">Send Clipboard</div>
  <div class="mi" style="left:26.5px;top:91px;letter-spacing:-0.35px">Restart</div>
  <div class="mi" style="left:26.5px;top:108.3px;letter-spacing:-0.17px">Remote Sound</div>
  <div class="abs" style="left:23px;top:126px;width:127px;height:1px;background:#d5d5d5"></div>
  <div class="mi" style="left:26.5px;top:131.1px">Connection Info</div>
  <svg id="arr" class="abs" style="left:0;top:0" width="152" height="148"><path d="M139.4,7.5 L141.7,9.7 L139.4,12.1 M139.4,94.1 L141.7,96.3 L139.4,98.6" fill="none" stroke="#3a3a3a" stroke-width="1.2"/></svg>
 </div>
 <!-- submenu -->
 <div class="menu" style="left:380px;top:46px;width:155px;height:58px;border:1px solid #bcb8b4;border-top-color:#d0cecc">
  <div class="mi" style="left:26px;top:5.3px">Lock Now</div>
  <div class="mi" style="left:26px;top:40.1px">Sign Out</div>
 </div>
 <!-- lock on session end -->
 <div class="abs" style="left:366px;top:64px;width:182px;height:22px;background:#94c8f6;box-shadow:1px 2px 3px rgba(0,0,0,0.3)">
  <div class="abs" style="left:32px;top:3.9px;font-size:11.5px;color:#000;white-space:nowrap;line-height:14px;-webkit-text-stroke:0.2px #000">Lock on Session End</div>
 </div>

 <!-- taskbar -->
 <div id="taskbar">
  <div class="abs" style="left:41px;top:0;width:183px;height:33px;background:#333"></div>
  <div class="abs" style="left:267px;top:0;width:38px;height:33px;background:#323f4a"></div>
  <div class="abs" style="left:267px;top:31px;width:38px;height:1px;background:#22282e"></div><div class="abs" style="left:267px;top:32px;width:38px;height:1px;background:#8ab0d4"></div>
  <div class="abs" style="left:309px;top:32px;width:34px;height:1px;background:#8ab0d4"></div>
  <div class="abs" style="left:686.5px;top:0;width:1px;height:33px;background:#4a4f55"></div>
  <div class="abs" style="left:74px;top:10.5px;font-size:12px;color:#a2a2a2;white-space:nowrap;line-height:14px">Type here to search</div>
 </div>
 <svg class="abs" style="left:0;top:458px" width="692" height="34" viewBox="0 458 692 34">
  <defs>
   <radialGradient id="rpc" cx="0.45" cy="0.3" r="0.75"><stop offset="0" stop-color="#8fd0ff"/><stop offset="0.55" stop-color="#2a8ae0"/><stop offset="1" stop-color="#0a58b0"/></radialGradient>
   <radialGradient id="grn" cx="0.45" cy="0.3" r="0.75"><stop offset="0" stop-color="#b4e84a"/><stop offset="1" stop-color="#4c9a12"/></radialGradient>
  </defs>
  <!-- start logo -->
  <g fill="#fff">
   <polygon points="14.1,469.6 19.1,468.9 19.1,473.9 14.1,473.9"/>
   <polygon points="20.7,468.7 28.1,467.7 28.1,473.9 20.7,473.9"/>
   <polygon points="14.1,474.9 19.1,474.9 19.1,480.6 14.1,479.9"/>
   <polygon points="20.7,474.9 28.1,474.9 28.1,481.8 20.7,480.8"/>
  </g>
  <!-- cortana -->
  <circle cx="58.25" cy="474.8" r="7.7" fill="none" stroke="#efefef" stroke-width="3"/>
  <!-- mic -->
  <g fill="none" stroke="#a0a0a0" stroke-width="1">
   <rect x="206" y="468.4" width="4.4" height="8.8" rx="2.2"/>
   <path d="M203.8,475.2 V476.6 Q203.8,479.8 208.2,479.8 Q212.6,479.8 212.6,476.6 V475.2 M208.2,479.8 V481.8 M205.8,481.8 H210.6"/>
  </g>
  <!-- task view -->
  <g fill="none" stroke="#dedede" stroke-width="1.1">
   <rect x="240.6" y="469.4" width="9.6" height="10.8"/>
   <path d="M239.4,470.6 H237.8 V479 H239.4 M251.4,470.6 H253 V479 H251.4"/>
  </g>
  <!-- chrome -->
  <g transform="translate(288.3,474.8)">
   <circle r="9.5" fill="#dd4b3e"/>
   <path d="M0,0 L-8.2,-4.75 A9.5,9.5 0 0 0 -4.75,8.23 Z" fill="#1da462"/>
   <path d="M0,0 L-4.75,8.23 A9.5,9.5 0 0 0 9.5,0 A9.5,9.5 0 0 0 8.2,-4.75 Z" fill="#ffcd40"/>
   <path d="M0,0 L8.2,-4.75 H0 Z" fill="#ffcd40"/>
   <path d="M-3.8,0 L-8.2,-4.75 L-4.2,2.2 Z" fill="#1da462"/>
   <circle r="4.4" fill="#fff"/>
   <circle r="3.5" fill="#4a8af4"/>
  </g>
  <!-- remotepc -->
  <circle cx="328.1" cy="475" r="9.6" fill="#fff"/>
  <circle cx="328.1" cy="475" r="8.6" fill="url(#rpc)"/>
  <path d="M323.4,472.6 Q325.6,468.6 330.4,468.8 M324.8,474.2 Q326.4,471.2 329.8,471.2" fill="none" stroke="#fff" stroke-width="1.1" opacity="0.9"/>
  <text x="329.6" y="479.6" font-family="Liberation Sans" font-size="10" font-weight="bold" fill="#fff" text-anchor="middle">R</text>
  <!-- tray chevron -->
  <path d="M503.4,477.6 L508.7,472.3 L514,477.6" fill="none" stroke="#d8d8d8" stroke-width="1.2"/>
  <!-- green R -->
  <circle cx="531.1" cy="475.4" r="6.2" fill="url(#grn)"/>
  <text x="531.3" y="478.8" font-family="Liberation Sans" font-size="8" font-weight="bold" fill="#fff" text-anchor="middle">R</text>
  <!-- network -->
  <g fill="none" stroke="#e0e0e0" stroke-width="1">
   <rect x="553" y="470.5" width="10.4" height="7"/>
   <path d="M558.2,477.5 V480.4 M554.2,480.6 H562.2"/>
   <rect x="550" y="470" width="4.4" height="3.4" fill="#000d18"/>
   <path d="M552.2,473.4 V477"/>
  </g>
  <!-- volume -->
  <g fill="none" stroke="#e0e0e0" stroke-width="1">
   <path d="M576.6,472.6 H579 L582,469.8 V479.6 L579,476.8 H576.6 Z"/>
   <path d="M584,472.6 Q585.4,474.7 584,476.8 M586.4,471 Q588.8,474.7 586.4,478.4"/>
   <path d="M588.8,469.6 Q591.6,474.7 588.8,479.8" stroke="#8a8a8a"/>
  </g>
  <!-- pen -->
  <g fill="none" stroke="#e4e4e4" stroke-width="1.1" stroke-linecap="round" stroke-linejoin="round">
   <path d="M611.6,480.2 L616.6,469.4 Q617.6,467.8 618.8,468.6 Q619.6,469.4 618.8,470.8 L613.8,481 Q612.6,482.2 611.6,480.2 Z"/>
   <path d="M611.8,479.4 Q607.6,475.8 607,478.8 Q607,482 612.2,481"/>
   <path d="M617.4,473.2 Q620.6,472.6 620.6,475.2 Q620.4,477 618,476.6"/>
  </g>
  <!-- keyboard -->
  <rect x="637.7" y="469.8" width="18.8" height="9.6" rx="0.8" fill="none" stroke="#e6e6e6" stroke-width="1"/>
  <g fill="#c8c8c8">
   <rect x="640.2" y="471.4" width="1.2" height="1"/><rect x="642.4" y="471.4" width="1.2" height="1"/><rect x="644.6" y="471.4" width="1.2" height="1"/><rect x="646.8" y="471.4" width="1.2" height="1"/><rect x="649" y="471.4" width="1.2" height="1"/><rect x="651.2" y="471.4" width="1.2" height="1"/><rect x="653.4" y="471.4" width="1.2" height="1"/>
   <rect x="640.2" y="473.9" width="14.4" height="1"/>
   <rect x="640.2" y="476.4" width="1.2" height="1"/><rect x="642.6" y="476.4" width="9.6" height="1"/><rect x="653.4" y="476.4" width="1.2" height="1"/>
  </g>
  <!-- notification -->
  <path d="M667.7,468.8 H680.5 V478 H676.2 L674.1,480.8 L672,478 H667.7 Z" fill="none" stroke="#e6e6e6" stroke-width="1"/>
 </svg>
<div class="bd" style="left:0;top:0;width:692px;height:1px;background:#4a4a4a"></div><div class="bd" style="left:0;top:0;width:1px;height:492px"></div><div class="bd" style="left:691px;top:0;width:1px;height:492px"></div><div class="bd" style="left:0;top:491px;width:692px;height:1px"></div>
</div>
</body></html>
